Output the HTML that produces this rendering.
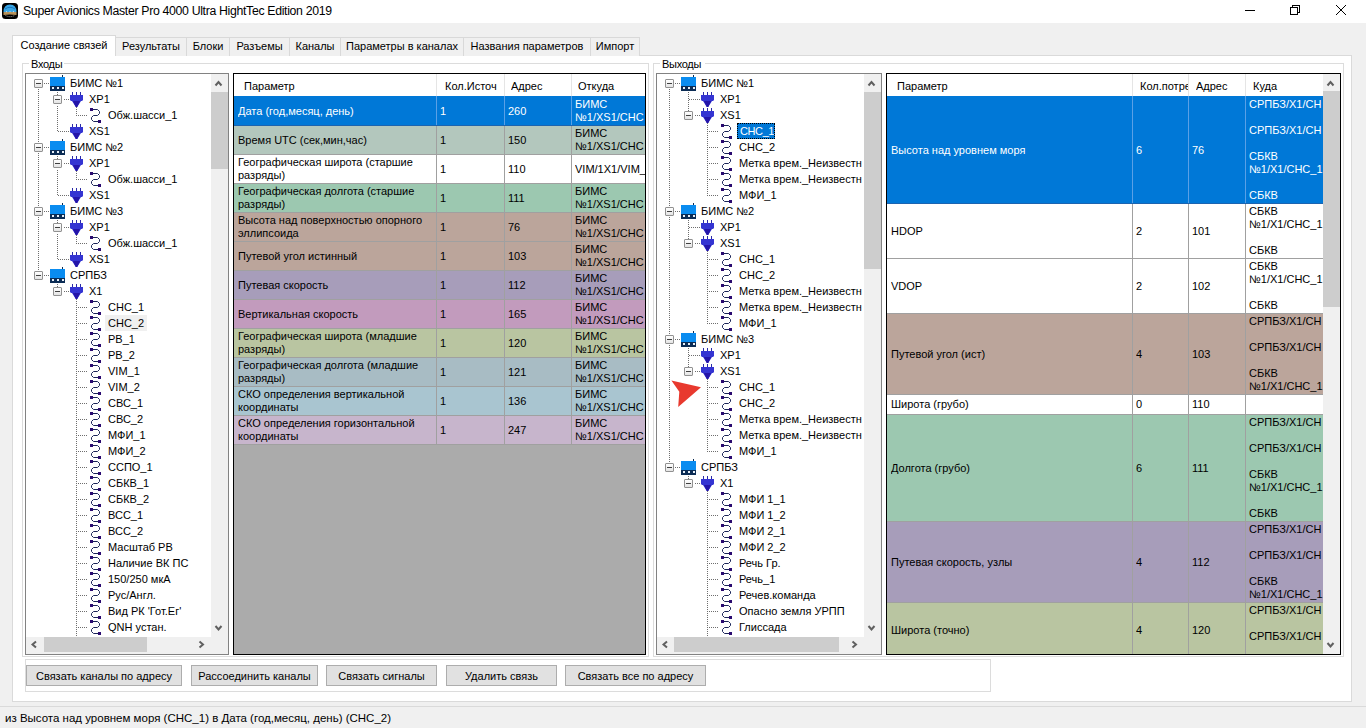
<!DOCTYPE html><html><head><meta charset="utf-8"><style>
html,body{margin:0;padding:0;}
body{width:1366px;height:728px;overflow:hidden;position:relative;background:#f0f0f0;font-family:"Liberation Sans", sans-serif;color:#000;}
div,span,svg{position:absolute;}
span{white-space:nowrap;}
.clip{overflow:hidden;}

</style></head><body>
<div style="left:0px;top:0px;width:1366px;height:23px;background:#fff"></div>
<svg style="left:2px;top:3px" width="16" height="16" viewBox="0 0 16 16">
<rect x="0" y="0" width="16" height="16" rx="3.5" fill="#000"/>
<path d="M1.5 9 Q1.5 1.5 8 1.5 Q14.5 1.5 14.5 9 Z" fill="#38a6e6"/>
<path d="M3 6 Q8 2.5 13 6" stroke="#1870b8" stroke-width="0.9" fill="none"/>
<path d="M1.5 9 H14.5 V12 Q8 11 1.5 12 Z" fill="#b8925a"/>
<path d="M4 8.7 H5 M7.5 8.7 H8.5 M11 8.7 H12" stroke="#f0f0f0" stroke-width="0.8"/>
<path d="M3.5 12.5 Q8 14.8 12.5 12.5" stroke="#c8c8c8" stroke-width="0.8" fill="none" stroke-dasharray="1 1"/>
</svg>
<span style="left:23px;top:4.24px;font-size:12.3px;line-height:15px;color:#000;letter-spacing:-0.33px">Super Avionics Master Pro 4000 Ultra HightTec Edition 2019</span>
<div style="left:1245px;top:10px;width:10px;height:1px;background:#000"></div>
<div style="left:1292px;top:5px;width:8px;height:8px;box-sizing:border-box;border:1px solid #000;background:#fff"></div>
<div style="left:1290px;top:7px;width:8px;height:8px;box-sizing:border-box;border:1px solid #000;background:#fff"></div>
<svg style="left:1335px;top:4px" width="12" height="12" viewBox="0 0 12 12">
<path d="M1 1 L11 11 M11 1 L1 11" stroke="#000" stroke-width="1"/></svg>
<div style="left:12px;top:55px;width:1340px;height:647px;box-sizing:border-box;border:1px solid #dadada;background:#fff"></div>
<div style="left:115px;top:37px;width:72px;height:19px;box-sizing:border-box;border:1px solid #d9d9d9;border-bottom:none;background:#f0f0f0"></div>
<span style="left:115px;width:72px;top:40px;font-size:11px;line-height:13px;text-align:center">Результаты</span>
<div style="left:186px;top:37px;width:44px;height:19px;box-sizing:border-box;border:1px solid #d9d9d9;border-bottom:none;background:#f0f0f0"></div>
<span style="left:186px;width:44px;top:40px;font-size:11px;line-height:13px;text-align:center">Блоки</span>
<div style="left:229px;top:37px;width:61px;height:19px;box-sizing:border-box;border:1px solid #d9d9d9;border-bottom:none;background:#f0f0f0"></div>
<span style="left:229px;width:61px;top:40px;font-size:11px;line-height:13px;text-align:center">Разъемы</span>
<div style="left:289px;top:37px;width:52px;height:19px;box-sizing:border-box;border:1px solid #d9d9d9;border-bottom:none;background:#f0f0f0"></div>
<span style="left:289px;width:52px;top:40px;font-size:11px;line-height:13px;text-align:center">Каналы</span>
<div style="left:340px;top:37px;width:124px;height:19px;box-sizing:border-box;border:1px solid #d9d9d9;border-bottom:none;background:#f0f0f0"></div>
<span style="left:340px;width:124px;top:40px;font-size:11px;line-height:13px;text-align:center">Параметры в каналах</span>
<div style="left:463px;top:37px;width:128px;height:19px;box-sizing:border-box;border:1px solid #d9d9d9;border-bottom:none;background:#f0f0f0"></div>
<span style="left:463px;width:128px;top:40px;font-size:11px;line-height:13px;text-align:center">Названия параметров</span>
<div style="left:590px;top:37px;width:50px;height:19px;box-sizing:border-box;border:1px solid #d9d9d9;border-bottom:none;background:#f0f0f0"></div>
<span style="left:590px;width:50px;top:40px;font-size:11px;line-height:13px;text-align:center">Импорт</span>
<div style="left:12px;top:35px;width:104px;height:21px;box-sizing:border-box;border:1px solid #d9d9d9;border-bottom:none;background:#fff"></div>
<div style="left:13px;top:55px;width:102px;height:1px;background:#fff"></div>
<span style="left:12px;width:104px;top:39px;font-size:11px;line-height:13px;text-align:center">Создание связей</span>
<div style="left:22px;top:63px;width:627px;height:594px;box-sizing:border-box;border:1px solid #dcdcdc"></div>
<div style="left:29px;top:58px;width:35px;height:12px;background:#fff"></div>
<span style="left:31px;top:57.69px;font-size:11px;line-height:13px;letter-spacing:-0.3px">Входы</span>
<div style="left:653px;top:63px;width:691px;height:594px;box-sizing:border-box;border:1px solid #dcdcdc"></div>
<div style="left:660px;top:58px;width:45px;height:12px;background:#fff"></div>
<span style="left:662px;top:57.69px;font-size:11px;line-height:13px;letter-spacing:-0.3px">Выходы</span>
<div style="left:25px;top:73px;width:204px;height:582px;box-sizing:border-box;border:1px solid #828282;background:#fff"></div>
<div class="clip" style="left:26px;top:74px;width:185px;height:562px">
<div style="left:18px;top:9px;width:6px;height:1px;background:repeating-linear-gradient(to right,#6e6e6e 0 1px,transparent 1px 2px)"></div>
<div style="left:12px;top:15px;width:1px;height:54px;background:repeating-linear-gradient(to bottom,#6e6e6e 0 1px,transparent 1px 2px)"></div>
<div style="left:8px;top:5px;width:9px;height:9px;box-sizing:border-box;border:1px solid #919191;border-radius:1px;background:linear-gradient(#fff,#e4e4e4)"></div>
<div style="left:10px;top:9px;width:5px;height:1px;background:#404040"></div>
<div style="left:38px;top:25px;width:5px;height:1px;background:repeating-linear-gradient(to right,#6e6e6e 0 1px,transparent 1px 2px)"></div>
<div style="left:31px;top:32px;width:1px;height:25px;background:repeating-linear-gradient(to bottom,#6e6e6e 0 1px,transparent 1px 2px)"></div>
<div style="left:27px;top:21px;width:9px;height:9px;box-sizing:border-box;border:1px solid #919191;border-radius:1px;background:linear-gradient(#fff,#e4e4e4)"></div>
<div style="left:29px;top:25px;width:5px;height:1px;background:#404040"></div>
<div style="left:50px;top:41px;width:12px;height:1px;background:repeating-linear-gradient(to right,#6e6e6e 0 1px,transparent 1px 2px)"></div>
<div style="left:32px;top:57px;width:11px;height:1px;background:repeating-linear-gradient(to right,#6e6e6e 0 1px,transparent 1px 2px)"></div>
<div style="left:18px;top:73px;width:6px;height:1px;background:repeating-linear-gradient(to right,#6e6e6e 0 1px,transparent 1px 2px)"></div>
<div style="left:12px;top:79px;width:1px;height:54px;background:repeating-linear-gradient(to bottom,#6e6e6e 0 1px,transparent 1px 2px)"></div>
<div style="left:8px;top:69px;width:9px;height:9px;box-sizing:border-box;border:1px solid #919191;border-radius:1px;background:linear-gradient(#fff,#e4e4e4)"></div>
<div style="left:10px;top:73px;width:5px;height:1px;background:#404040"></div>
<div style="left:38px;top:89px;width:5px;height:1px;background:repeating-linear-gradient(to right,#6e6e6e 0 1px,transparent 1px 2px)"></div>
<div style="left:31px;top:96px;width:1px;height:25px;background:repeating-linear-gradient(to bottom,#6e6e6e 0 1px,transparent 1px 2px)"></div>
<div style="left:27px;top:85px;width:9px;height:9px;box-sizing:border-box;border:1px solid #919191;border-radius:1px;background:linear-gradient(#fff,#e4e4e4)"></div>
<div style="left:29px;top:89px;width:5px;height:1px;background:#404040"></div>
<div style="left:50px;top:105px;width:12px;height:1px;background:repeating-linear-gradient(to right,#6e6e6e 0 1px,transparent 1px 2px)"></div>
<div style="left:32px;top:121px;width:11px;height:1px;background:repeating-linear-gradient(to right,#6e6e6e 0 1px,transparent 1px 2px)"></div>
<div style="left:18px;top:137px;width:6px;height:1px;background:repeating-linear-gradient(to right,#6e6e6e 0 1px,transparent 1px 2px)"></div>
<div style="left:12px;top:143px;width:1px;height:54px;background:repeating-linear-gradient(to bottom,#6e6e6e 0 1px,transparent 1px 2px)"></div>
<div style="left:8px;top:133px;width:9px;height:9px;box-sizing:border-box;border:1px solid #919191;border-radius:1px;background:linear-gradient(#fff,#e4e4e4)"></div>
<div style="left:10px;top:137px;width:5px;height:1px;background:#404040"></div>
<div style="left:38px;top:153px;width:5px;height:1px;background:repeating-linear-gradient(to right,#6e6e6e 0 1px,transparent 1px 2px)"></div>
<div style="left:31px;top:160px;width:1px;height:25px;background:repeating-linear-gradient(to bottom,#6e6e6e 0 1px,transparent 1px 2px)"></div>
<div style="left:27px;top:149px;width:9px;height:9px;box-sizing:border-box;border:1px solid #919191;border-radius:1px;background:linear-gradient(#fff,#e4e4e4)"></div>
<div style="left:29px;top:153px;width:5px;height:1px;background:#404040"></div>
<div style="left:50px;top:169px;width:12px;height:1px;background:repeating-linear-gradient(to right,#6e6e6e 0 1px,transparent 1px 2px)"></div>
<div style="left:32px;top:185px;width:11px;height:1px;background:repeating-linear-gradient(to right,#6e6e6e 0 1px,transparent 1px 2px)"></div>
<div style="left:18px;top:201px;width:6px;height:1px;background:repeating-linear-gradient(to right,#6e6e6e 0 1px,transparent 1px 2px)"></div>
<div style="left:8px;top:197px;width:9px;height:9px;box-sizing:border-box;border:1px solid #919191;border-radius:1px;background:linear-gradient(#fff,#e4e4e4)"></div>
<div style="left:10px;top:201px;width:5px;height:1px;background:#404040"></div>
<div style="left:38px;top:217px;width:5px;height:1px;background:repeating-linear-gradient(to right,#6e6e6e 0 1px,transparent 1px 2px)"></div>
<div style="left:27px;top:213px;width:9px;height:9px;box-sizing:border-box;border:1px solid #919191;border-radius:1px;background:linear-gradient(#fff,#e4e4e4)"></div>
<div style="left:29px;top:217px;width:5px;height:1px;background:#404040"></div>
<div style="left:50px;top:233px;width:12px;height:1px;background:repeating-linear-gradient(to right,#6e6e6e 0 1px,transparent 1px 2px)"></div>
<div style="left:50px;top:235px;width:1px;height:14px;background:repeating-linear-gradient(to bottom,#6e6e6e 0 1px,transparent 1px 2px)"></div>
<div style="left:50px;top:249px;width:12px;height:1px;background:repeating-linear-gradient(to right,#6e6e6e 0 1px,transparent 1px 2px)"></div>
<div style="left:50px;top:251px;width:1px;height:14px;background:repeating-linear-gradient(to bottom,#6e6e6e 0 1px,transparent 1px 2px)"></div>
<div style="left:50px;top:265px;width:12px;height:1px;background:repeating-linear-gradient(to right,#6e6e6e 0 1px,transparent 1px 2px)"></div>
<div style="left:50px;top:267px;width:1px;height:14px;background:repeating-linear-gradient(to bottom,#6e6e6e 0 1px,transparent 1px 2px)"></div>
<div style="left:50px;top:281px;width:12px;height:1px;background:repeating-linear-gradient(to right,#6e6e6e 0 1px,transparent 1px 2px)"></div>
<div style="left:50px;top:283px;width:1px;height:14px;background:repeating-linear-gradient(to bottom,#6e6e6e 0 1px,transparent 1px 2px)"></div>
<div style="left:50px;top:297px;width:12px;height:1px;background:repeating-linear-gradient(to right,#6e6e6e 0 1px,transparent 1px 2px)"></div>
<div style="left:50px;top:299px;width:1px;height:14px;background:repeating-linear-gradient(to bottom,#6e6e6e 0 1px,transparent 1px 2px)"></div>
<div style="left:50px;top:313px;width:12px;height:1px;background:repeating-linear-gradient(to right,#6e6e6e 0 1px,transparent 1px 2px)"></div>
<div style="left:50px;top:315px;width:1px;height:14px;background:repeating-linear-gradient(to bottom,#6e6e6e 0 1px,transparent 1px 2px)"></div>
<div style="left:50px;top:329px;width:12px;height:1px;background:repeating-linear-gradient(to right,#6e6e6e 0 1px,transparent 1px 2px)"></div>
<div style="left:50px;top:331px;width:1px;height:14px;background:repeating-linear-gradient(to bottom,#6e6e6e 0 1px,transparent 1px 2px)"></div>
<div style="left:50px;top:345px;width:12px;height:1px;background:repeating-linear-gradient(to right,#6e6e6e 0 1px,transparent 1px 2px)"></div>
<div style="left:50px;top:347px;width:1px;height:14px;background:repeating-linear-gradient(to bottom,#6e6e6e 0 1px,transparent 1px 2px)"></div>
<div style="left:50px;top:361px;width:12px;height:1px;background:repeating-linear-gradient(to right,#6e6e6e 0 1px,transparent 1px 2px)"></div>
<div style="left:50px;top:363px;width:1px;height:14px;background:repeating-linear-gradient(to bottom,#6e6e6e 0 1px,transparent 1px 2px)"></div>
<div style="left:50px;top:377px;width:12px;height:1px;background:repeating-linear-gradient(to right,#6e6e6e 0 1px,transparent 1px 2px)"></div>
<div style="left:50px;top:379px;width:1px;height:14px;background:repeating-linear-gradient(to bottom,#6e6e6e 0 1px,transparent 1px 2px)"></div>
<div style="left:50px;top:393px;width:12px;height:1px;background:repeating-linear-gradient(to right,#6e6e6e 0 1px,transparent 1px 2px)"></div>
<div style="left:50px;top:395px;width:1px;height:14px;background:repeating-linear-gradient(to bottom,#6e6e6e 0 1px,transparent 1px 2px)"></div>
<div style="left:50px;top:409px;width:12px;height:1px;background:repeating-linear-gradient(to right,#6e6e6e 0 1px,transparent 1px 2px)"></div>
<div style="left:50px;top:411px;width:1px;height:14px;background:repeating-linear-gradient(to bottom,#6e6e6e 0 1px,transparent 1px 2px)"></div>
<div style="left:50px;top:425px;width:12px;height:1px;background:repeating-linear-gradient(to right,#6e6e6e 0 1px,transparent 1px 2px)"></div>
<div style="left:50px;top:427px;width:1px;height:14px;background:repeating-linear-gradient(to bottom,#6e6e6e 0 1px,transparent 1px 2px)"></div>
<div style="left:50px;top:441px;width:12px;height:1px;background:repeating-linear-gradient(to right,#6e6e6e 0 1px,transparent 1px 2px)"></div>
<div style="left:50px;top:443px;width:1px;height:14px;background:repeating-linear-gradient(to bottom,#6e6e6e 0 1px,transparent 1px 2px)"></div>
<div style="left:50px;top:457px;width:12px;height:1px;background:repeating-linear-gradient(to right,#6e6e6e 0 1px,transparent 1px 2px)"></div>
<div style="left:50px;top:459px;width:1px;height:14px;background:repeating-linear-gradient(to bottom,#6e6e6e 0 1px,transparent 1px 2px)"></div>
<div style="left:50px;top:473px;width:12px;height:1px;background:repeating-linear-gradient(to right,#6e6e6e 0 1px,transparent 1px 2px)"></div>
<div style="left:50px;top:475px;width:1px;height:14px;background:repeating-linear-gradient(to bottom,#6e6e6e 0 1px,transparent 1px 2px)"></div>
<div style="left:50px;top:489px;width:12px;height:1px;background:repeating-linear-gradient(to right,#6e6e6e 0 1px,transparent 1px 2px)"></div>
<div style="left:50px;top:491px;width:1px;height:14px;background:repeating-linear-gradient(to bottom,#6e6e6e 0 1px,transparent 1px 2px)"></div>
<div style="left:50px;top:505px;width:12px;height:1px;background:repeating-linear-gradient(to right,#6e6e6e 0 1px,transparent 1px 2px)"></div>
<div style="left:50px;top:507px;width:1px;height:14px;background:repeating-linear-gradient(to bottom,#6e6e6e 0 1px,transparent 1px 2px)"></div>
<div style="left:50px;top:521px;width:12px;height:1px;background:repeating-linear-gradient(to right,#6e6e6e 0 1px,transparent 1px 2px)"></div>
<div style="left:50px;top:523px;width:1px;height:14px;background:repeating-linear-gradient(to bottom,#6e6e6e 0 1px,transparent 1px 2px)"></div>
<div style="left:50px;top:537px;width:12px;height:1px;background:repeating-linear-gradient(to right,#6e6e6e 0 1px,transparent 1px 2px)"></div>
<div style="left:50px;top:539px;width:1px;height:14px;background:repeating-linear-gradient(to bottom,#6e6e6e 0 1px,transparent 1px 2px)"></div>
<div style="left:50px;top:553px;width:12px;height:1px;background:repeating-linear-gradient(to right,#6e6e6e 0 1px,transparent 1px 2px)"></div>
<div style="left:50px;top:555px;width:1px;height:14px;background:repeating-linear-gradient(to bottom,#6e6e6e 0 1px,transparent 1px 2px)"></div>
<div style="left:50px;top:569px;width:12px;height:1px;background:repeating-linear-gradient(to right,#6e6e6e 0 1px,transparent 1px 2px)"></div>
<div style="left:31px;top:18px;width:1px;height:3px;background:repeating-linear-gradient(to bottom,#6e6e6e 0 1px,transparent 1px 2px)"></div>
<div style="left:50px;top:33px;width:1px;height:8px;background:repeating-linear-gradient(to bottom,#6e6e6e 0 1px,transparent 1px 2px)"></div>
<div style="left:31px;top:82px;width:1px;height:3px;background:repeating-linear-gradient(to bottom,#6e6e6e 0 1px,transparent 1px 2px)"></div>
<div style="left:50px;top:97px;width:1px;height:8px;background:repeating-linear-gradient(to bottom,#6e6e6e 0 1px,transparent 1px 2px)"></div>
<div style="left:31px;top:146px;width:1px;height:3px;background:repeating-linear-gradient(to bottom,#6e6e6e 0 1px,transparent 1px 2px)"></div>
<div style="left:50px;top:161px;width:1px;height:8px;background:repeating-linear-gradient(to bottom,#6e6e6e 0 1px,transparent 1px 2px)"></div>
<div style="left:31px;top:210px;width:1px;height:3px;background:repeating-linear-gradient(to bottom,#6e6e6e 0 1px,transparent 1px 2px)"></div>
<div style="left:50px;top:225px;width:1px;height:8px;background:repeating-linear-gradient(to bottom,#6e6e6e 0 1px,transparent 1px 2px)"></div>
<svg style="left:24px;top:1px" width="16" height="16" viewBox="0 0 16 16" shape-rendering="crispEdges">
<rect x="12" y="0" width="1" height="2" fill="#0a2a50"/>
<rect x="0" y="2" width="15" height="9" fill="#0a8cf0"/>
<rect x="0" y="11" width="15" height="5" fill="#0b2c55"/>
<rect x="1.5" y="12" width="2" height="1.5" fill="#e8f0f8"/><rect x="6.5" y="12" width="2" height="1.5" fill="#e8f0f8"/><rect x="11.5" y="12" width="2" height="1.5" fill="#e8f0f8"/>
</svg>
<span style="left:44px;top:1px;font-size:11px;line-height:16px">БИМС №1</span>
<svg style="left:43px;top:17px" width="16" height="16" viewBox="0 0 16 16">
<rect x="3" y="1" width="1" height="3" fill="#2a2aa8" shape-rendering="crispEdges"/><rect x="7" y="1" width="1" height="3" fill="#2a2aa8" shape-rendering="crispEdges"/><rect x="11" y="1" width="1" height="3" fill="#2a2aa8" shape-rendering="crispEdges"/>
<path d="M1 4 H14 V9 L13 10 H12 L8.2 16 H6.8 L3 10 H2 L1 9 Z" fill="#3434d2"/>
<path d="M4 10 H11 L8.2 16 H6.8 Z" fill="#2414a8"/>
</svg>
<span style="left:63px;top:17px;font-size:11px;line-height:16px">XP1</span>
<svg style="left:62px;top:33px" width="16" height="16" viewBox="0 0 16 16">
<path d="M5 2.5 H9.5 L11.5 4.5 V6.5 L9.5 8.5 H5.5 L3.5 10.5 V12.5 L5.5 14.5 H10" stroke="#1a2458" stroke-width="1" fill="none"/>
<rect x="2" y="1" width="3" height="3" fill="#2a0a70"/>
<rect x="10" y="13" width="3" height="3" fill="#2a0a70"/>
</svg>
<span style="left:82px;top:33px;font-size:11px;line-height:16px">Обж.шасси_1</span>
<svg style="left:43px;top:49px" width="16" height="16" viewBox="0 0 16 16">
<rect x="3" y="1" width="1" height="3" fill="#2a2aa8" shape-rendering="crispEdges"/><rect x="7" y="1" width="1" height="3" fill="#2a2aa8" shape-rendering="crispEdges"/><rect x="11" y="1" width="1" height="3" fill="#2a2aa8" shape-rendering="crispEdges"/>
<path d="M1 4 H14 V9 L13 10 H12 L8.2 16 H6.8 L3 10 H2 L1 9 Z" fill="#3434d2"/>
<path d="M4 10 H11 L8.2 16 H6.8 Z" fill="#2414a8"/>
</svg>
<span style="left:63px;top:49px;font-size:11px;line-height:16px">XS1</span>
<svg style="left:24px;top:65px" width="16" height="16" viewBox="0 0 16 16" shape-rendering="crispEdges">
<rect x="12" y="0" width="1" height="2" fill="#0a2a50"/>
<rect x="0" y="2" width="15" height="9" fill="#0a8cf0"/>
<rect x="0" y="11" width="15" height="5" fill="#0b2c55"/>
<rect x="1.5" y="12" width="2" height="1.5" fill="#e8f0f8"/><rect x="6.5" y="12" width="2" height="1.5" fill="#e8f0f8"/><rect x="11.5" y="12" width="2" height="1.5" fill="#e8f0f8"/>
</svg>
<span style="left:44px;top:65px;font-size:11px;line-height:16px">БИМС №2</span>
<svg style="left:43px;top:81px" width="16" height="16" viewBox="0 0 16 16">
<rect x="3" y="1" width="1" height="3" fill="#2a2aa8" shape-rendering="crispEdges"/><rect x="7" y="1" width="1" height="3" fill="#2a2aa8" shape-rendering="crispEdges"/><rect x="11" y="1" width="1" height="3" fill="#2a2aa8" shape-rendering="crispEdges"/>
<path d="M1 4 H14 V9 L13 10 H12 L8.2 16 H6.8 L3 10 H2 L1 9 Z" fill="#3434d2"/>
<path d="M4 10 H11 L8.2 16 H6.8 Z" fill="#2414a8"/>
</svg>
<span style="left:63px;top:81px;font-size:11px;line-height:16px">XP1</span>
<svg style="left:62px;top:97px" width="16" height="16" viewBox="0 0 16 16">
<path d="M5 2.5 H9.5 L11.5 4.5 V6.5 L9.5 8.5 H5.5 L3.5 10.5 V12.5 L5.5 14.5 H10" stroke="#1a2458" stroke-width="1" fill="none"/>
<rect x="2" y="1" width="3" height="3" fill="#2a0a70"/>
<rect x="10" y="13" width="3" height="3" fill="#2a0a70"/>
</svg>
<span style="left:82px;top:97px;font-size:11px;line-height:16px">Обж.шасси_1</span>
<svg style="left:43px;top:113px" width="16" height="16" viewBox="0 0 16 16">
<rect x="3" y="1" width="1" height="3" fill="#2a2aa8" shape-rendering="crispEdges"/><rect x="7" y="1" width="1" height="3" fill="#2a2aa8" shape-rendering="crispEdges"/><rect x="11" y="1" width="1" height="3" fill="#2a2aa8" shape-rendering="crispEdges"/>
<path d="M1 4 H14 V9 L13 10 H12 L8.2 16 H6.8 L3 10 H2 L1 9 Z" fill="#3434d2"/>
<path d="M4 10 H11 L8.2 16 H6.8 Z" fill="#2414a8"/>
</svg>
<span style="left:63px;top:113px;font-size:11px;line-height:16px">XS1</span>
<svg style="left:24px;top:129px" width="16" height="16" viewBox="0 0 16 16" shape-rendering="crispEdges">
<rect x="12" y="0" width="1" height="2" fill="#0a2a50"/>
<rect x="0" y="2" width="15" height="9" fill="#0a8cf0"/>
<rect x="0" y="11" width="15" height="5" fill="#0b2c55"/>
<rect x="1.5" y="12" width="2" height="1.5" fill="#e8f0f8"/><rect x="6.5" y="12" width="2" height="1.5" fill="#e8f0f8"/><rect x="11.5" y="12" width="2" height="1.5" fill="#e8f0f8"/>
</svg>
<span style="left:44px;top:129px;font-size:11px;line-height:16px">БИМС №3</span>
<svg style="left:43px;top:145px" width="16" height="16" viewBox="0 0 16 16">
<rect x="3" y="1" width="1" height="3" fill="#2a2aa8" shape-rendering="crispEdges"/><rect x="7" y="1" width="1" height="3" fill="#2a2aa8" shape-rendering="crispEdges"/><rect x="11" y="1" width="1" height="3" fill="#2a2aa8" shape-rendering="crispEdges"/>
<path d="M1 4 H14 V9 L13 10 H12 L8.2 16 H6.8 L3 10 H2 L1 9 Z" fill="#3434d2"/>
<path d="M4 10 H11 L8.2 16 H6.8 Z" fill="#2414a8"/>
</svg>
<span style="left:63px;top:145px;font-size:11px;line-height:16px">XP1</span>
<svg style="left:62px;top:161px" width="16" height="16" viewBox="0 0 16 16">
<path d="M5 2.5 H9.5 L11.5 4.5 V6.5 L9.5 8.5 H5.5 L3.5 10.5 V12.5 L5.5 14.5 H10" stroke="#1a2458" stroke-width="1" fill="none"/>
<rect x="2" y="1" width="3" height="3" fill="#2a0a70"/>
<rect x="10" y="13" width="3" height="3" fill="#2a0a70"/>
</svg>
<span style="left:82px;top:161px;font-size:11px;line-height:16px">Обж.шасси_1</span>
<svg style="left:43px;top:177px" width="16" height="16" viewBox="0 0 16 16">
<rect x="3" y="1" width="1" height="3" fill="#2a2aa8" shape-rendering="crispEdges"/><rect x="7" y="1" width="1" height="3" fill="#2a2aa8" shape-rendering="crispEdges"/><rect x="11" y="1" width="1" height="3" fill="#2a2aa8" shape-rendering="crispEdges"/>
<path d="M1 4 H14 V9 L13 10 H12 L8.2 16 H6.8 L3 10 H2 L1 9 Z" fill="#3434d2"/>
<path d="M4 10 H11 L8.2 16 H6.8 Z" fill="#2414a8"/>
</svg>
<span style="left:63px;top:177px;font-size:11px;line-height:16px">XS1</span>
<svg style="left:24px;top:193px" width="16" height="16" viewBox="0 0 16 16" shape-rendering="crispEdges">
<rect x="12" y="0" width="1" height="2" fill="#0a2a50"/>
<rect x="0" y="2" width="15" height="9" fill="#0a8cf0"/>
<rect x="0" y="11" width="15" height="5" fill="#0b2c55"/>
<rect x="1.5" y="12" width="2" height="1.5" fill="#e8f0f8"/><rect x="6.5" y="12" width="2" height="1.5" fill="#e8f0f8"/><rect x="11.5" y="12" width="2" height="1.5" fill="#e8f0f8"/>
</svg>
<span style="left:44px;top:193px;font-size:11px;line-height:16px">СРПБЗ</span>
<svg style="left:43px;top:209px" width="16" height="16" viewBox="0 0 16 16">
<rect x="3" y="1" width="1" height="3" fill="#2a2aa8" shape-rendering="crispEdges"/><rect x="7" y="1" width="1" height="3" fill="#2a2aa8" shape-rendering="crispEdges"/><rect x="11" y="1" width="1" height="3" fill="#2a2aa8" shape-rendering="crispEdges"/>
<path d="M1 4 H14 V9 L13 10 H12 L8.2 16 H6.8 L3 10 H2 L1 9 Z" fill="#3434d2"/>
<path d="M4 10 H11 L8.2 16 H6.8 Z" fill="#2414a8"/>
</svg>
<span style="left:63px;top:209px;font-size:11px;line-height:16px">X1</span>
<svg style="left:62px;top:225px" width="16" height="16" viewBox="0 0 16 16">
<path d="M5 2.5 H9.5 L11.5 4.5 V6.5 L9.5 8.5 H5.5 L3.5 10.5 V12.5 L5.5 14.5 H10" stroke="#1a2458" stroke-width="1" fill="none"/>
<rect x="2" y="1" width="3" height="3" fill="#2a0a70"/>
<rect x="10" y="13" width="3" height="3" fill="#2a0a70"/>
</svg>
<span style="left:82px;top:225px;font-size:11px;line-height:16px">СНС_1</span>
<svg style="left:62px;top:241px" width="16" height="16" viewBox="0 0 16 16">
<path d="M5 2.5 H9.5 L11.5 4.5 V6.5 L9.5 8.5 H5.5 L3.5 10.5 V12.5 L5.5 14.5 H10" stroke="#1a2458" stroke-width="1" fill="none"/>
<rect x="2" y="1" width="3" height="3" fill="#2a0a70"/>
<rect x="10" y="13" width="3" height="3" fill="#2a0a70"/>
</svg>
<div style="left:79px;top:241px;height:16px;padding:0 2px;box-sizing:border-box;background:#f0f0f0"><span style="position:static;display:block;font-size:11px;line-height:16px;padding:0 1px">СНС_2</span></div>
<svg style="left:62px;top:257px" width="16" height="16" viewBox="0 0 16 16">
<path d="M5 2.5 H9.5 L11.5 4.5 V6.5 L9.5 8.5 H5.5 L3.5 10.5 V12.5 L5.5 14.5 H10" stroke="#1a2458" stroke-width="1" fill="none"/>
<rect x="2" y="1" width="3" height="3" fill="#2a0a70"/>
<rect x="10" y="13" width="3" height="3" fill="#2a0a70"/>
</svg>
<span style="left:82px;top:257px;font-size:11px;line-height:16px">РВ_1</span>
<svg style="left:62px;top:273px" width="16" height="16" viewBox="0 0 16 16">
<path d="M5 2.5 H9.5 L11.5 4.5 V6.5 L9.5 8.5 H5.5 L3.5 10.5 V12.5 L5.5 14.5 H10" stroke="#1a2458" stroke-width="1" fill="none"/>
<rect x="2" y="1" width="3" height="3" fill="#2a0a70"/>
<rect x="10" y="13" width="3" height="3" fill="#2a0a70"/>
</svg>
<span style="left:82px;top:273px;font-size:11px;line-height:16px">РВ_2</span>
<svg style="left:62px;top:289px" width="16" height="16" viewBox="0 0 16 16">
<path d="M5 2.5 H9.5 L11.5 4.5 V6.5 L9.5 8.5 H5.5 L3.5 10.5 V12.5 L5.5 14.5 H10" stroke="#1a2458" stroke-width="1" fill="none"/>
<rect x="2" y="1" width="3" height="3" fill="#2a0a70"/>
<rect x="10" y="13" width="3" height="3" fill="#2a0a70"/>
</svg>
<span style="left:82px;top:289px;font-size:11px;line-height:16px">VIM_1</span>
<svg style="left:62px;top:305px" width="16" height="16" viewBox="0 0 16 16">
<path d="M5 2.5 H9.5 L11.5 4.5 V6.5 L9.5 8.5 H5.5 L3.5 10.5 V12.5 L5.5 14.5 H10" stroke="#1a2458" stroke-width="1" fill="none"/>
<rect x="2" y="1" width="3" height="3" fill="#2a0a70"/>
<rect x="10" y="13" width="3" height="3" fill="#2a0a70"/>
</svg>
<span style="left:82px;top:305px;font-size:11px;line-height:16px">VIM_2</span>
<svg style="left:62px;top:321px" width="16" height="16" viewBox="0 0 16 16">
<path d="M5 2.5 H9.5 L11.5 4.5 V6.5 L9.5 8.5 H5.5 L3.5 10.5 V12.5 L5.5 14.5 H10" stroke="#1a2458" stroke-width="1" fill="none"/>
<rect x="2" y="1" width="3" height="3" fill="#2a0a70"/>
<rect x="10" y="13" width="3" height="3" fill="#2a0a70"/>
</svg>
<span style="left:82px;top:321px;font-size:11px;line-height:16px">СВС_1</span>
<svg style="left:62px;top:337px" width="16" height="16" viewBox="0 0 16 16">
<path d="M5 2.5 H9.5 L11.5 4.5 V6.5 L9.5 8.5 H5.5 L3.5 10.5 V12.5 L5.5 14.5 H10" stroke="#1a2458" stroke-width="1" fill="none"/>
<rect x="2" y="1" width="3" height="3" fill="#2a0a70"/>
<rect x="10" y="13" width="3" height="3" fill="#2a0a70"/>
</svg>
<span style="left:82px;top:337px;font-size:11px;line-height:16px">СВС_2</span>
<svg style="left:62px;top:353px" width="16" height="16" viewBox="0 0 16 16">
<path d="M5 2.5 H9.5 L11.5 4.5 V6.5 L9.5 8.5 H5.5 L3.5 10.5 V12.5 L5.5 14.5 H10" stroke="#1a2458" stroke-width="1" fill="none"/>
<rect x="2" y="1" width="3" height="3" fill="#2a0a70"/>
<rect x="10" y="13" width="3" height="3" fill="#2a0a70"/>
</svg>
<span style="left:82px;top:353px;font-size:11px;line-height:16px">МФИ_1</span>
<svg style="left:62px;top:369px" width="16" height="16" viewBox="0 0 16 16">
<path d="M5 2.5 H9.5 L11.5 4.5 V6.5 L9.5 8.5 H5.5 L3.5 10.5 V12.5 L5.5 14.5 H10" stroke="#1a2458" stroke-width="1" fill="none"/>
<rect x="2" y="1" width="3" height="3" fill="#2a0a70"/>
<rect x="10" y="13" width="3" height="3" fill="#2a0a70"/>
</svg>
<span style="left:82px;top:369px;font-size:11px;line-height:16px">МФИ_2</span>
<svg style="left:62px;top:385px" width="16" height="16" viewBox="0 0 16 16">
<path d="M5 2.5 H9.5 L11.5 4.5 V6.5 L9.5 8.5 H5.5 L3.5 10.5 V12.5 L5.5 14.5 H10" stroke="#1a2458" stroke-width="1" fill="none"/>
<rect x="2" y="1" width="3" height="3" fill="#2a0a70"/>
<rect x="10" y="13" width="3" height="3" fill="#2a0a70"/>
</svg>
<span style="left:82px;top:385px;font-size:11px;line-height:16px">ССПО_1</span>
<svg style="left:62px;top:401px" width="16" height="16" viewBox="0 0 16 16">
<path d="M5 2.5 H9.5 L11.5 4.5 V6.5 L9.5 8.5 H5.5 L3.5 10.5 V12.5 L5.5 14.5 H10" stroke="#1a2458" stroke-width="1" fill="none"/>
<rect x="2" y="1" width="3" height="3" fill="#2a0a70"/>
<rect x="10" y="13" width="3" height="3" fill="#2a0a70"/>
</svg>
<span style="left:82px;top:401px;font-size:11px;line-height:16px">СБКВ_1</span>
<svg style="left:62px;top:417px" width="16" height="16" viewBox="0 0 16 16">
<path d="M5 2.5 H9.5 L11.5 4.5 V6.5 L9.5 8.5 H5.5 L3.5 10.5 V12.5 L5.5 14.5 H10" stroke="#1a2458" stroke-width="1" fill="none"/>
<rect x="2" y="1" width="3" height="3" fill="#2a0a70"/>
<rect x="10" y="13" width="3" height="3" fill="#2a0a70"/>
</svg>
<span style="left:82px;top:417px;font-size:11px;line-height:16px">СБКВ_2</span>
<svg style="left:62px;top:433px" width="16" height="16" viewBox="0 0 16 16">
<path d="M5 2.5 H9.5 L11.5 4.5 V6.5 L9.5 8.5 H5.5 L3.5 10.5 V12.5 L5.5 14.5 H10" stroke="#1a2458" stroke-width="1" fill="none"/>
<rect x="2" y="1" width="3" height="3" fill="#2a0a70"/>
<rect x="10" y="13" width="3" height="3" fill="#2a0a70"/>
</svg>
<span style="left:82px;top:433px;font-size:11px;line-height:16px">ВСС_1</span>
<svg style="left:62px;top:449px" width="16" height="16" viewBox="0 0 16 16">
<path d="M5 2.5 H9.5 L11.5 4.5 V6.5 L9.5 8.5 H5.5 L3.5 10.5 V12.5 L5.5 14.5 H10" stroke="#1a2458" stroke-width="1" fill="none"/>
<rect x="2" y="1" width="3" height="3" fill="#2a0a70"/>
<rect x="10" y="13" width="3" height="3" fill="#2a0a70"/>
</svg>
<span style="left:82px;top:449px;font-size:11px;line-height:16px">ВСС_2</span>
<svg style="left:62px;top:465px" width="16" height="16" viewBox="0 0 16 16">
<path d="M5 2.5 H9.5 L11.5 4.5 V6.5 L9.5 8.5 H5.5 L3.5 10.5 V12.5 L5.5 14.5 H10" stroke="#1a2458" stroke-width="1" fill="none"/>
<rect x="2" y="1" width="3" height="3" fill="#2a0a70"/>
<rect x="10" y="13" width="3" height="3" fill="#2a0a70"/>
</svg>
<span style="left:82px;top:465px;font-size:11px;line-height:16px">Масштаб РВ</span>
<svg style="left:62px;top:481px" width="16" height="16" viewBox="0 0 16 16">
<path d="M5 2.5 H9.5 L11.5 4.5 V6.5 L9.5 8.5 H5.5 L3.5 10.5 V12.5 L5.5 14.5 H10" stroke="#1a2458" stroke-width="1" fill="none"/>
<rect x="2" y="1" width="3" height="3" fill="#2a0a70"/>
<rect x="10" y="13" width="3" height="3" fill="#2a0a70"/>
</svg>
<span style="left:82px;top:481px;font-size:11px;line-height:16px">Наличие ВК ПС</span>
<svg style="left:62px;top:497px" width="16" height="16" viewBox="0 0 16 16">
<path d="M5 2.5 H9.5 L11.5 4.5 V6.5 L9.5 8.5 H5.5 L3.5 10.5 V12.5 L5.5 14.5 H10" stroke="#1a2458" stroke-width="1" fill="none"/>
<rect x="2" y="1" width="3" height="3" fill="#2a0a70"/>
<rect x="10" y="13" width="3" height="3" fill="#2a0a70"/>
</svg>
<span style="left:82px;top:497px;font-size:11px;line-height:16px">150/250 мкА</span>
<svg style="left:62px;top:513px" width="16" height="16" viewBox="0 0 16 16">
<path d="M5 2.5 H9.5 L11.5 4.5 V6.5 L9.5 8.5 H5.5 L3.5 10.5 V12.5 L5.5 14.5 H10" stroke="#1a2458" stroke-width="1" fill="none"/>
<rect x="2" y="1" width="3" height="3" fill="#2a0a70"/>
<rect x="10" y="13" width="3" height="3" fill="#2a0a70"/>
</svg>
<span style="left:82px;top:513px;font-size:11px;line-height:16px">Рус/Англ.</span>
<svg style="left:62px;top:529px" width="16" height="16" viewBox="0 0 16 16">
<path d="M5 2.5 H9.5 L11.5 4.5 V6.5 L9.5 8.5 H5.5 L3.5 10.5 V12.5 L5.5 14.5 H10" stroke="#1a2458" stroke-width="1" fill="none"/>
<rect x="2" y="1" width="3" height="3" fill="#2a0a70"/>
<rect x="10" y="13" width="3" height="3" fill="#2a0a70"/>
</svg>
<span style="left:82px;top:529px;font-size:11px;line-height:16px">Вид РК 'Гот.Ег'</span>
<svg style="left:62px;top:545px" width="16" height="16" viewBox="0 0 16 16">
<path d="M5 2.5 H9.5 L11.5 4.5 V6.5 L9.5 8.5 H5.5 L3.5 10.5 V12.5 L5.5 14.5 H10" stroke="#1a2458" stroke-width="1" fill="none"/>
<rect x="2" y="1" width="3" height="3" fill="#2a0a70"/>
<rect x="10" y="13" width="3" height="3" fill="#2a0a70"/>
</svg>
<span style="left:82px;top:545px;font-size:11px;line-height:16px">QNH устан.</span>
<svg style="left:62px;top:561px" width="16" height="16" viewBox="0 0 16 16">
<path d="M5 2.5 H9.5 L11.5 4.5 V6.5 L9.5 8.5 H5.5 L3.5 10.5 V12.5 L5.5 14.5 H10" stroke="#1a2458" stroke-width="1" fill="none"/>
<rect x="2" y="1" width="3" height="3" fill="#2a0a70"/>
<rect x="10" y="13" width="3" height="3" fill="#2a0a70"/>
</svg>
<span style="left:82px;top:561px;font-size:11px;line-height:16px">Сброс</span>
</div>
<div style="left:211px;top:74px;width:17px;height:563px;background:#f0f0f0"></div>
<div style="left:211px;top:92px;width:17px;height:77px;background:#cdcdcd"></div>
<svg style="left:211px;top:74px" width="17" height="17"><path d="M4.5 11.5 L7.5 8 L10.5 11.5" stroke="#606060" stroke-width="2" fill="none"/></svg>
<svg style="left:211px;top:620px" width="17" height="17"><path d="M4.5 6 L7.5 9.5 L10.5 6" stroke="#606060" stroke-width="2" fill="none"/></svg>
<div style="left:26px;top:637px;width:202px;height:17px;background:#f0f0f0"></div>
<div style="left:44px;top:637px;width:103px;height:15px;background:#cdcdcd"></div>
<svg style="left:26px;top:637px" width="17" height="17"><path d="M10 4.5 L6.5 7.5 L10 10.5" stroke="#606060" stroke-width="2" fill="none"/></svg>
<svg style="left:193px;top:637px" width="17" height="17"><path d="M6.5 4.5 L10 7.5 L6.5 10.5" stroke="#606060" stroke-width="2" fill="none"/></svg>
<div style="left:656px;top:73px;width:226px;height:582px;box-sizing:border-box;border:1px solid #828282;background:#fff"></div>
<div class="clip" style="left:657px;top:74px;width:207px;height:562px">
<div style="left:18px;top:9px;width:6px;height:1px;background:repeating-linear-gradient(to right,#6e6e6e 0 1px,transparent 1px 2px)"></div>
<div style="left:12px;top:15px;width:1px;height:118px;background:repeating-linear-gradient(to bottom,#6e6e6e 0 1px,transparent 1px 2px)"></div>
<div style="left:8px;top:5px;width:9px;height:9px;box-sizing:border-box;border:1px solid #919191;border-radius:1px;background:linear-gradient(#fff,#e4e4e4)"></div>
<div style="left:10px;top:9px;width:5px;height:1px;background:#404040"></div>
<div style="left:32px;top:25px;width:11px;height:1px;background:repeating-linear-gradient(to right,#6e6e6e 0 1px,transparent 1px 2px)"></div>
<div style="left:31px;top:26px;width:1px;height:11px;background:repeating-linear-gradient(to bottom,#6e6e6e 0 1px,transparent 1px 2px)"></div>
<div style="left:38px;top:41px;width:5px;height:1px;background:repeating-linear-gradient(to right,#6e6e6e 0 1px,transparent 1px 2px)"></div>
<div style="left:27px;top:37px;width:9px;height:9px;box-sizing:border-box;border:1px solid #919191;border-radius:1px;background:linear-gradient(#fff,#e4e4e4)"></div>
<div style="left:29px;top:41px;width:5px;height:1px;background:#404040"></div>
<div style="left:50px;top:57px;width:12px;height:1px;background:repeating-linear-gradient(to right,#6e6e6e 0 1px,transparent 1px 2px)"></div>
<div style="left:50px;top:59px;width:1px;height:14px;background:repeating-linear-gradient(to bottom,#6e6e6e 0 1px,transparent 1px 2px)"></div>
<div style="left:50px;top:73px;width:12px;height:1px;background:repeating-linear-gradient(to right,#6e6e6e 0 1px,transparent 1px 2px)"></div>
<div style="left:50px;top:75px;width:1px;height:14px;background:repeating-linear-gradient(to bottom,#6e6e6e 0 1px,transparent 1px 2px)"></div>
<div style="left:50px;top:89px;width:12px;height:1px;background:repeating-linear-gradient(to right,#6e6e6e 0 1px,transparent 1px 2px)"></div>
<div style="left:50px;top:91px;width:1px;height:14px;background:repeating-linear-gradient(to bottom,#6e6e6e 0 1px,transparent 1px 2px)"></div>
<div style="left:50px;top:105px;width:12px;height:1px;background:repeating-linear-gradient(to right,#6e6e6e 0 1px,transparent 1px 2px)"></div>
<div style="left:50px;top:107px;width:1px;height:14px;background:repeating-linear-gradient(to bottom,#6e6e6e 0 1px,transparent 1px 2px)"></div>
<div style="left:50px;top:121px;width:12px;height:1px;background:repeating-linear-gradient(to right,#6e6e6e 0 1px,transparent 1px 2px)"></div>
<div style="left:18px;top:137px;width:6px;height:1px;background:repeating-linear-gradient(to right,#6e6e6e 0 1px,transparent 1px 2px)"></div>
<div style="left:12px;top:143px;width:1px;height:118px;background:repeating-linear-gradient(to bottom,#6e6e6e 0 1px,transparent 1px 2px)"></div>
<div style="left:8px;top:133px;width:9px;height:9px;box-sizing:border-box;border:1px solid #919191;border-radius:1px;background:linear-gradient(#fff,#e4e4e4)"></div>
<div style="left:10px;top:137px;width:5px;height:1px;background:#404040"></div>
<div style="left:32px;top:153px;width:11px;height:1px;background:repeating-linear-gradient(to right,#6e6e6e 0 1px,transparent 1px 2px)"></div>
<div style="left:31px;top:154px;width:1px;height:11px;background:repeating-linear-gradient(to bottom,#6e6e6e 0 1px,transparent 1px 2px)"></div>
<div style="left:38px;top:169px;width:5px;height:1px;background:repeating-linear-gradient(to right,#6e6e6e 0 1px,transparent 1px 2px)"></div>
<div style="left:27px;top:165px;width:9px;height:9px;box-sizing:border-box;border:1px solid #919191;border-radius:1px;background:linear-gradient(#fff,#e4e4e4)"></div>
<div style="left:29px;top:169px;width:5px;height:1px;background:#404040"></div>
<div style="left:50px;top:185px;width:12px;height:1px;background:repeating-linear-gradient(to right,#6e6e6e 0 1px,transparent 1px 2px)"></div>
<div style="left:50px;top:187px;width:1px;height:14px;background:repeating-linear-gradient(to bottom,#6e6e6e 0 1px,transparent 1px 2px)"></div>
<div style="left:50px;top:201px;width:12px;height:1px;background:repeating-linear-gradient(to right,#6e6e6e 0 1px,transparent 1px 2px)"></div>
<div style="left:50px;top:203px;width:1px;height:14px;background:repeating-linear-gradient(to bottom,#6e6e6e 0 1px,transparent 1px 2px)"></div>
<div style="left:50px;top:217px;width:12px;height:1px;background:repeating-linear-gradient(to right,#6e6e6e 0 1px,transparent 1px 2px)"></div>
<div style="left:50px;top:219px;width:1px;height:14px;background:repeating-linear-gradient(to bottom,#6e6e6e 0 1px,transparent 1px 2px)"></div>
<div style="left:50px;top:233px;width:12px;height:1px;background:repeating-linear-gradient(to right,#6e6e6e 0 1px,transparent 1px 2px)"></div>
<div style="left:50px;top:235px;width:1px;height:14px;background:repeating-linear-gradient(to bottom,#6e6e6e 0 1px,transparent 1px 2px)"></div>
<div style="left:50px;top:249px;width:12px;height:1px;background:repeating-linear-gradient(to right,#6e6e6e 0 1px,transparent 1px 2px)"></div>
<div style="left:18px;top:265px;width:6px;height:1px;background:repeating-linear-gradient(to right,#6e6e6e 0 1px,transparent 1px 2px)"></div>
<div style="left:12px;top:271px;width:1px;height:118px;background:repeating-linear-gradient(to bottom,#6e6e6e 0 1px,transparent 1px 2px)"></div>
<div style="left:8px;top:261px;width:9px;height:9px;box-sizing:border-box;border:1px solid #919191;border-radius:1px;background:linear-gradient(#fff,#e4e4e4)"></div>
<div style="left:10px;top:265px;width:5px;height:1px;background:#404040"></div>
<div style="left:32px;top:281px;width:11px;height:1px;background:repeating-linear-gradient(to right,#6e6e6e 0 1px,transparent 1px 2px)"></div>
<div style="left:31px;top:282px;width:1px;height:11px;background:repeating-linear-gradient(to bottom,#6e6e6e 0 1px,transparent 1px 2px)"></div>
<div style="left:38px;top:297px;width:5px;height:1px;background:repeating-linear-gradient(to right,#6e6e6e 0 1px,transparent 1px 2px)"></div>
<div style="left:27px;top:293px;width:9px;height:9px;box-sizing:border-box;border:1px solid #919191;border-radius:1px;background:linear-gradient(#fff,#e4e4e4)"></div>
<div style="left:29px;top:297px;width:5px;height:1px;background:#404040"></div>
<div style="left:50px;top:313px;width:12px;height:1px;background:repeating-linear-gradient(to right,#6e6e6e 0 1px,transparent 1px 2px)"></div>
<div style="left:50px;top:315px;width:1px;height:14px;background:repeating-linear-gradient(to bottom,#6e6e6e 0 1px,transparent 1px 2px)"></div>
<div style="left:50px;top:329px;width:12px;height:1px;background:repeating-linear-gradient(to right,#6e6e6e 0 1px,transparent 1px 2px)"></div>
<div style="left:50px;top:331px;width:1px;height:14px;background:repeating-linear-gradient(to bottom,#6e6e6e 0 1px,transparent 1px 2px)"></div>
<div style="left:50px;top:345px;width:12px;height:1px;background:repeating-linear-gradient(to right,#6e6e6e 0 1px,transparent 1px 2px)"></div>
<div style="left:50px;top:347px;width:1px;height:14px;background:repeating-linear-gradient(to bottom,#6e6e6e 0 1px,transparent 1px 2px)"></div>
<div style="left:50px;top:361px;width:12px;height:1px;background:repeating-linear-gradient(to right,#6e6e6e 0 1px,transparent 1px 2px)"></div>
<div style="left:50px;top:363px;width:1px;height:14px;background:repeating-linear-gradient(to bottom,#6e6e6e 0 1px,transparent 1px 2px)"></div>
<div style="left:50px;top:377px;width:12px;height:1px;background:repeating-linear-gradient(to right,#6e6e6e 0 1px,transparent 1px 2px)"></div>
<div style="left:18px;top:393px;width:6px;height:1px;background:repeating-linear-gradient(to right,#6e6e6e 0 1px,transparent 1px 2px)"></div>
<div style="left:8px;top:389px;width:9px;height:9px;box-sizing:border-box;border:1px solid #919191;border-radius:1px;background:linear-gradient(#fff,#e4e4e4)"></div>
<div style="left:10px;top:393px;width:5px;height:1px;background:#404040"></div>
<div style="left:38px;top:409px;width:5px;height:1px;background:repeating-linear-gradient(to right,#6e6e6e 0 1px,transparent 1px 2px)"></div>
<div style="left:27px;top:405px;width:9px;height:9px;box-sizing:border-box;border:1px solid #919191;border-radius:1px;background:linear-gradient(#fff,#e4e4e4)"></div>
<div style="left:29px;top:409px;width:5px;height:1px;background:#404040"></div>
<div style="left:50px;top:425px;width:12px;height:1px;background:repeating-linear-gradient(to right,#6e6e6e 0 1px,transparent 1px 2px)"></div>
<div style="left:50px;top:427px;width:1px;height:14px;background:repeating-linear-gradient(to bottom,#6e6e6e 0 1px,transparent 1px 2px)"></div>
<div style="left:50px;top:441px;width:12px;height:1px;background:repeating-linear-gradient(to right,#6e6e6e 0 1px,transparent 1px 2px)"></div>
<div style="left:50px;top:443px;width:1px;height:14px;background:repeating-linear-gradient(to bottom,#6e6e6e 0 1px,transparent 1px 2px)"></div>
<div style="left:50px;top:457px;width:12px;height:1px;background:repeating-linear-gradient(to right,#6e6e6e 0 1px,transparent 1px 2px)"></div>
<div style="left:50px;top:459px;width:1px;height:14px;background:repeating-linear-gradient(to bottom,#6e6e6e 0 1px,transparent 1px 2px)"></div>
<div style="left:50px;top:473px;width:12px;height:1px;background:repeating-linear-gradient(to right,#6e6e6e 0 1px,transparent 1px 2px)"></div>
<div style="left:50px;top:475px;width:1px;height:14px;background:repeating-linear-gradient(to bottom,#6e6e6e 0 1px,transparent 1px 2px)"></div>
<div style="left:50px;top:489px;width:12px;height:1px;background:repeating-linear-gradient(to right,#6e6e6e 0 1px,transparent 1px 2px)"></div>
<div style="left:50px;top:491px;width:1px;height:14px;background:repeating-linear-gradient(to bottom,#6e6e6e 0 1px,transparent 1px 2px)"></div>
<div style="left:50px;top:505px;width:12px;height:1px;background:repeating-linear-gradient(to right,#6e6e6e 0 1px,transparent 1px 2px)"></div>
<div style="left:50px;top:507px;width:1px;height:14px;background:repeating-linear-gradient(to bottom,#6e6e6e 0 1px,transparent 1px 2px)"></div>
<div style="left:50px;top:521px;width:12px;height:1px;background:repeating-linear-gradient(to right,#6e6e6e 0 1px,transparent 1px 2px)"></div>
<div style="left:50px;top:523px;width:1px;height:14px;background:repeating-linear-gradient(to bottom,#6e6e6e 0 1px,transparent 1px 2px)"></div>
<div style="left:50px;top:537px;width:12px;height:1px;background:repeating-linear-gradient(to right,#6e6e6e 0 1px,transparent 1px 2px)"></div>
<div style="left:50px;top:539px;width:1px;height:14px;background:repeating-linear-gradient(to bottom,#6e6e6e 0 1px,transparent 1px 2px)"></div>
<div style="left:50px;top:553px;width:12px;height:1px;background:repeating-linear-gradient(to right,#6e6e6e 0 1px,transparent 1px 2px)"></div>
<div style="left:50px;top:555px;width:1px;height:14px;background:repeating-linear-gradient(to bottom,#6e6e6e 0 1px,transparent 1px 2px)"></div>
<div style="left:50px;top:569px;width:12px;height:1px;background:repeating-linear-gradient(to right,#6e6e6e 0 1px,transparent 1px 2px)"></div>
<div style="left:31px;top:18px;width:1px;height:7px;background:repeating-linear-gradient(to bottom,#6e6e6e 0 1px,transparent 1px 2px)"></div>
<div style="left:50px;top:49px;width:1px;height:8px;background:repeating-linear-gradient(to bottom,#6e6e6e 0 1px,transparent 1px 2px)"></div>
<div style="left:31px;top:146px;width:1px;height:7px;background:repeating-linear-gradient(to bottom,#6e6e6e 0 1px,transparent 1px 2px)"></div>
<div style="left:50px;top:177px;width:1px;height:8px;background:repeating-linear-gradient(to bottom,#6e6e6e 0 1px,transparent 1px 2px)"></div>
<div style="left:31px;top:274px;width:1px;height:7px;background:repeating-linear-gradient(to bottom,#6e6e6e 0 1px,transparent 1px 2px)"></div>
<div style="left:50px;top:305px;width:1px;height:8px;background:repeating-linear-gradient(to bottom,#6e6e6e 0 1px,transparent 1px 2px)"></div>
<div style="left:31px;top:402px;width:1px;height:3px;background:repeating-linear-gradient(to bottom,#6e6e6e 0 1px,transparent 1px 2px)"></div>
<div style="left:50px;top:417px;width:1px;height:8px;background:repeating-linear-gradient(to bottom,#6e6e6e 0 1px,transparent 1px 2px)"></div>
<svg style="left:24px;top:1px" width="16" height="16" viewBox="0 0 16 16" shape-rendering="crispEdges">
<rect x="12" y="0" width="1" height="2" fill="#0a2a50"/>
<rect x="0" y="2" width="15" height="9" fill="#0a8cf0"/>
<rect x="0" y="11" width="15" height="5" fill="#0b2c55"/>
<rect x="1.5" y="12" width="2" height="1.5" fill="#e8f0f8"/><rect x="6.5" y="12" width="2" height="1.5" fill="#e8f0f8"/><rect x="11.5" y="12" width="2" height="1.5" fill="#e8f0f8"/>
</svg>
<span style="left:44px;top:1px;font-size:11px;line-height:16px">БИМС №1</span>
<svg style="left:43px;top:17px" width="16" height="16" viewBox="0 0 16 16">
<rect x="3" y="1" width="1" height="3" fill="#2a2aa8" shape-rendering="crispEdges"/><rect x="7" y="1" width="1" height="3" fill="#2a2aa8" shape-rendering="crispEdges"/><rect x="11" y="1" width="1" height="3" fill="#2a2aa8" shape-rendering="crispEdges"/>
<path d="M1 4 H14 V9 L13 10 H12 L8.2 16 H6.8 L3 10 H2 L1 9 Z" fill="#3434d2"/>
<path d="M4 10 H11 L8.2 16 H6.8 Z" fill="#2414a8"/>
</svg>
<span style="left:63px;top:17px;font-size:11px;line-height:16px">XP1</span>
<svg style="left:43px;top:33px" width="16" height="16" viewBox="0 0 16 16">
<rect x="3" y="1" width="1" height="3" fill="#2a2aa8" shape-rendering="crispEdges"/><rect x="7" y="1" width="1" height="3" fill="#2a2aa8" shape-rendering="crispEdges"/><rect x="11" y="1" width="1" height="3" fill="#2a2aa8" shape-rendering="crispEdges"/>
<path d="M1 4 H14 V9 L13 10 H12 L8.2 16 H6.8 L3 10 H2 L1 9 Z" fill="#3434d2"/>
<path d="M4 10 H11 L8.2 16 H6.8 Z" fill="#2414a8"/>
</svg>
<span style="left:63px;top:33px;font-size:11px;line-height:16px">XS1</span>
<svg style="left:62px;top:49px" width="16" height="16" viewBox="0 0 16 16">
<path d="M5 2.5 H9.5 L11.5 4.5 V6.5 L9.5 8.5 H5.5 L3.5 10.5 V12.5 L5.5 14.5 H10" stroke="#1a2458" stroke-width="1" fill="none"/>
<rect x="2" y="1" width="3" height="3" fill="#2a0a70"/>
<rect x="10" y="13" width="3" height="3" fill="#2a0a70"/>
</svg>
<div class="clip" style="left:80px;top:49px;width:38px;height:16px;box-sizing:border-box;background:#0078d7;border:1px dotted #000"><span style="left:2px;top:-1px;font-size:11px;line-height:16px;color:#fff;letter-spacing:-0.4px">СНС_1</span></div>
<svg style="left:62px;top:65px" width="16" height="16" viewBox="0 0 16 16">
<path d="M5 2.5 H9.5 L11.5 4.5 V6.5 L9.5 8.5 H5.5 L3.5 10.5 V12.5 L5.5 14.5 H10" stroke="#1a2458" stroke-width="1" fill="none"/>
<rect x="2" y="1" width="3" height="3" fill="#2a0a70"/>
<rect x="10" y="13" width="3" height="3" fill="#2a0a70"/>
</svg>
<span style="left:82px;top:65px;font-size:11px;line-height:16px">СНС_2</span>
<svg style="left:62px;top:81px" width="16" height="16" viewBox="0 0 16 16">
<path d="M5 2.5 H9.5 L11.5 4.5 V6.5 L9.5 8.5 H5.5 L3.5 10.5 V12.5 L5.5 14.5 H10" stroke="#1a2458" stroke-width="1" fill="none"/>
<rect x="2" y="1" width="3" height="3" fill="#2a0a70"/>
<rect x="10" y="13" width="3" height="3" fill="#2a0a70"/>
</svg>
<span style="left:82px;top:81px;font-size:11px;line-height:16px">Метка врем._Неизвестн</span>
<svg style="left:62px;top:97px" width="16" height="16" viewBox="0 0 16 16">
<path d="M5 2.5 H9.5 L11.5 4.5 V6.5 L9.5 8.5 H5.5 L3.5 10.5 V12.5 L5.5 14.5 H10" stroke="#1a2458" stroke-width="1" fill="none"/>
<rect x="2" y="1" width="3" height="3" fill="#2a0a70"/>
<rect x="10" y="13" width="3" height="3" fill="#2a0a70"/>
</svg>
<span style="left:82px;top:97px;font-size:11px;line-height:16px">Метка врем._Неизвестн</span>
<svg style="left:62px;top:113px" width="16" height="16" viewBox="0 0 16 16">
<path d="M5 2.5 H9.5 L11.5 4.5 V6.5 L9.5 8.5 H5.5 L3.5 10.5 V12.5 L5.5 14.5 H10" stroke="#1a2458" stroke-width="1" fill="none"/>
<rect x="2" y="1" width="3" height="3" fill="#2a0a70"/>
<rect x="10" y="13" width="3" height="3" fill="#2a0a70"/>
</svg>
<span style="left:82px;top:113px;font-size:11px;line-height:16px">МФИ_1</span>
<svg style="left:24px;top:129px" width="16" height="16" viewBox="0 0 16 16" shape-rendering="crispEdges">
<rect x="12" y="0" width="1" height="2" fill="#0a2a50"/>
<rect x="0" y="2" width="15" height="9" fill="#0a8cf0"/>
<rect x="0" y="11" width="15" height="5" fill="#0b2c55"/>
<rect x="1.5" y="12" width="2" height="1.5" fill="#e8f0f8"/><rect x="6.5" y="12" width="2" height="1.5" fill="#e8f0f8"/><rect x="11.5" y="12" width="2" height="1.5" fill="#e8f0f8"/>
</svg>
<span style="left:44px;top:129px;font-size:11px;line-height:16px">БИМС №2</span>
<svg style="left:43px;top:145px" width="16" height="16" viewBox="0 0 16 16">
<rect x="3" y="1" width="1" height="3" fill="#2a2aa8" shape-rendering="crispEdges"/><rect x="7" y="1" width="1" height="3" fill="#2a2aa8" shape-rendering="crispEdges"/><rect x="11" y="1" width="1" height="3" fill="#2a2aa8" shape-rendering="crispEdges"/>
<path d="M1 4 H14 V9 L13 10 H12 L8.2 16 H6.8 L3 10 H2 L1 9 Z" fill="#3434d2"/>
<path d="M4 10 H11 L8.2 16 H6.8 Z" fill="#2414a8"/>
</svg>
<span style="left:63px;top:145px;font-size:11px;line-height:16px">XP1</span>
<svg style="left:43px;top:161px" width="16" height="16" viewBox="0 0 16 16">
<rect x="3" y="1" width="1" height="3" fill="#2a2aa8" shape-rendering="crispEdges"/><rect x="7" y="1" width="1" height="3" fill="#2a2aa8" shape-rendering="crispEdges"/><rect x="11" y="1" width="1" height="3" fill="#2a2aa8" shape-rendering="crispEdges"/>
<path d="M1 4 H14 V9 L13 10 H12 L8.2 16 H6.8 L3 10 H2 L1 9 Z" fill="#3434d2"/>
<path d="M4 10 H11 L8.2 16 H6.8 Z" fill="#2414a8"/>
</svg>
<span style="left:63px;top:161px;font-size:11px;line-height:16px">XS1</span>
<svg style="left:62px;top:177px" width="16" height="16" viewBox="0 0 16 16">
<path d="M5 2.5 H9.5 L11.5 4.5 V6.5 L9.5 8.5 H5.5 L3.5 10.5 V12.5 L5.5 14.5 H10" stroke="#1a2458" stroke-width="1" fill="none"/>
<rect x="2" y="1" width="3" height="3" fill="#2a0a70"/>
<rect x="10" y="13" width="3" height="3" fill="#2a0a70"/>
</svg>
<span style="left:82px;top:177px;font-size:11px;line-height:16px">СНС_1</span>
<svg style="left:62px;top:193px" width="16" height="16" viewBox="0 0 16 16">
<path d="M5 2.5 H9.5 L11.5 4.5 V6.5 L9.5 8.5 H5.5 L3.5 10.5 V12.5 L5.5 14.5 H10" stroke="#1a2458" stroke-width="1" fill="none"/>
<rect x="2" y="1" width="3" height="3" fill="#2a0a70"/>
<rect x="10" y="13" width="3" height="3" fill="#2a0a70"/>
</svg>
<span style="left:82px;top:193px;font-size:11px;line-height:16px">СНС_2</span>
<svg style="left:62px;top:209px" width="16" height="16" viewBox="0 0 16 16">
<path d="M5 2.5 H9.5 L11.5 4.5 V6.5 L9.5 8.5 H5.5 L3.5 10.5 V12.5 L5.5 14.5 H10" stroke="#1a2458" stroke-width="1" fill="none"/>
<rect x="2" y="1" width="3" height="3" fill="#2a0a70"/>
<rect x="10" y="13" width="3" height="3" fill="#2a0a70"/>
</svg>
<span style="left:82px;top:209px;font-size:11px;line-height:16px">Метка врем._Неизвестн</span>
<svg style="left:62px;top:225px" width="16" height="16" viewBox="0 0 16 16">
<path d="M5 2.5 H9.5 L11.5 4.5 V6.5 L9.5 8.5 H5.5 L3.5 10.5 V12.5 L5.5 14.5 H10" stroke="#1a2458" stroke-width="1" fill="none"/>
<rect x="2" y="1" width="3" height="3" fill="#2a0a70"/>
<rect x="10" y="13" width="3" height="3" fill="#2a0a70"/>
</svg>
<span style="left:82px;top:225px;font-size:11px;line-height:16px">Метка врем._Неизвестн</span>
<svg style="left:62px;top:241px" width="16" height="16" viewBox="0 0 16 16">
<path d="M5 2.5 H9.5 L11.5 4.5 V6.5 L9.5 8.5 H5.5 L3.5 10.5 V12.5 L5.5 14.5 H10" stroke="#1a2458" stroke-width="1" fill="none"/>
<rect x="2" y="1" width="3" height="3" fill="#2a0a70"/>
<rect x="10" y="13" width="3" height="3" fill="#2a0a70"/>
</svg>
<span style="left:82px;top:241px;font-size:11px;line-height:16px">МФИ_1</span>
<svg style="left:24px;top:257px" width="16" height="16" viewBox="0 0 16 16" shape-rendering="crispEdges">
<rect x="12" y="0" width="1" height="2" fill="#0a2a50"/>
<rect x="0" y="2" width="15" height="9" fill="#0a8cf0"/>
<rect x="0" y="11" width="15" height="5" fill="#0b2c55"/>
<rect x="1.5" y="12" width="2" height="1.5" fill="#e8f0f8"/><rect x="6.5" y="12" width="2" height="1.5" fill="#e8f0f8"/><rect x="11.5" y="12" width="2" height="1.5" fill="#e8f0f8"/>
</svg>
<span style="left:44px;top:257px;font-size:11px;line-height:16px">БИМС №3</span>
<svg style="left:43px;top:273px" width="16" height="16" viewBox="0 0 16 16">
<rect x="3" y="1" width="1" height="3" fill="#2a2aa8" shape-rendering="crispEdges"/><rect x="7" y="1" width="1" height="3" fill="#2a2aa8" shape-rendering="crispEdges"/><rect x="11" y="1" width="1" height="3" fill="#2a2aa8" shape-rendering="crispEdges"/>
<path d="M1 4 H14 V9 L13 10 H12 L8.2 16 H6.8 L3 10 H2 L1 9 Z" fill="#3434d2"/>
<path d="M4 10 H11 L8.2 16 H6.8 Z" fill="#2414a8"/>
</svg>
<span style="left:63px;top:273px;font-size:11px;line-height:16px">XP1</span>
<svg style="left:43px;top:289px" width="16" height="16" viewBox="0 0 16 16">
<rect x="3" y="1" width="1" height="3" fill="#2a2aa8" shape-rendering="crispEdges"/><rect x="7" y="1" width="1" height="3" fill="#2a2aa8" shape-rendering="crispEdges"/><rect x="11" y="1" width="1" height="3" fill="#2a2aa8" shape-rendering="crispEdges"/>
<path d="M1 4 H14 V9 L13 10 H12 L8.2 16 H6.8 L3 10 H2 L1 9 Z" fill="#3434d2"/>
<path d="M4 10 H11 L8.2 16 H6.8 Z" fill="#2414a8"/>
</svg>
<span style="left:63px;top:289px;font-size:11px;line-height:16px">XS1</span>
<svg style="left:62px;top:305px" width="16" height="16" viewBox="0 0 16 16">
<path d="M5 2.5 H9.5 L11.5 4.5 V6.5 L9.5 8.5 H5.5 L3.5 10.5 V12.5 L5.5 14.5 H10" stroke="#1a2458" stroke-width="1" fill="none"/>
<rect x="2" y="1" width="3" height="3" fill="#2a0a70"/>
<rect x="10" y="13" width="3" height="3" fill="#2a0a70"/>
</svg>
<span style="left:82px;top:305px;font-size:11px;line-height:16px">СНС_1</span>
<svg style="left:62px;top:321px" width="16" height="16" viewBox="0 0 16 16">
<path d="M5 2.5 H9.5 L11.5 4.5 V6.5 L9.5 8.5 H5.5 L3.5 10.5 V12.5 L5.5 14.5 H10" stroke="#1a2458" stroke-width="1" fill="none"/>
<rect x="2" y="1" width="3" height="3" fill="#2a0a70"/>
<rect x="10" y="13" width="3" height="3" fill="#2a0a70"/>
</svg>
<span style="left:82px;top:321px;font-size:11px;line-height:16px">СНС_2</span>
<svg style="left:62px;top:337px" width="16" height="16" viewBox="0 0 16 16">
<path d="M5 2.5 H9.5 L11.5 4.5 V6.5 L9.5 8.5 H5.5 L3.5 10.5 V12.5 L5.5 14.5 H10" stroke="#1a2458" stroke-width="1" fill="none"/>
<rect x="2" y="1" width="3" height="3" fill="#2a0a70"/>
<rect x="10" y="13" width="3" height="3" fill="#2a0a70"/>
</svg>
<span style="left:82px;top:337px;font-size:11px;line-height:16px">Метка врем._Неизвестн</span>
<svg style="left:62px;top:353px" width="16" height="16" viewBox="0 0 16 16">
<path d="M5 2.5 H9.5 L11.5 4.5 V6.5 L9.5 8.5 H5.5 L3.5 10.5 V12.5 L5.5 14.5 H10" stroke="#1a2458" stroke-width="1" fill="none"/>
<rect x="2" y="1" width="3" height="3" fill="#2a0a70"/>
<rect x="10" y="13" width="3" height="3" fill="#2a0a70"/>
</svg>
<span style="left:82px;top:353px;font-size:11px;line-height:16px">Метка врем._Неизвестн</span>
<svg style="left:62px;top:369px" width="16" height="16" viewBox="0 0 16 16">
<path d="M5 2.5 H9.5 L11.5 4.5 V6.5 L9.5 8.5 H5.5 L3.5 10.5 V12.5 L5.5 14.5 H10" stroke="#1a2458" stroke-width="1" fill="none"/>
<rect x="2" y="1" width="3" height="3" fill="#2a0a70"/>
<rect x="10" y="13" width="3" height="3" fill="#2a0a70"/>
</svg>
<span style="left:82px;top:369px;font-size:11px;line-height:16px">МФИ_1</span>
<svg style="left:24px;top:385px" width="16" height="16" viewBox="0 0 16 16" shape-rendering="crispEdges">
<rect x="12" y="0" width="1" height="2" fill="#0a2a50"/>
<rect x="0" y="2" width="15" height="9" fill="#0a8cf0"/>
<rect x="0" y="11" width="15" height="5" fill="#0b2c55"/>
<rect x="1.5" y="12" width="2" height="1.5" fill="#e8f0f8"/><rect x="6.5" y="12" width="2" height="1.5" fill="#e8f0f8"/><rect x="11.5" y="12" width="2" height="1.5" fill="#e8f0f8"/>
</svg>
<span style="left:44px;top:385px;font-size:11px;line-height:16px">СРПБЗ</span>
<svg style="left:43px;top:401px" width="16" height="16" viewBox="0 0 16 16">
<rect x="3" y="1" width="1" height="3" fill="#2a2aa8" shape-rendering="crispEdges"/><rect x="7" y="1" width="1" height="3" fill="#2a2aa8" shape-rendering="crispEdges"/><rect x="11" y="1" width="1" height="3" fill="#2a2aa8" shape-rendering="crispEdges"/>
<path d="M1 4 H14 V9 L13 10 H12 L8.2 16 H6.8 L3 10 H2 L1 9 Z" fill="#3434d2"/>
<path d="M4 10 H11 L8.2 16 H6.8 Z" fill="#2414a8"/>
</svg>
<span style="left:63px;top:401px;font-size:11px;line-height:16px">X1</span>
<svg style="left:62px;top:417px" width="16" height="16" viewBox="0 0 16 16">
<path d="M5 2.5 H9.5 L11.5 4.5 V6.5 L9.5 8.5 H5.5 L3.5 10.5 V12.5 L5.5 14.5 H10" stroke="#1a2458" stroke-width="1" fill="none"/>
<rect x="2" y="1" width="3" height="3" fill="#2a0a70"/>
<rect x="10" y="13" width="3" height="3" fill="#2a0a70"/>
</svg>
<span style="left:82px;top:417px;font-size:11px;line-height:16px">МФИ 1_1</span>
<svg style="left:62px;top:433px" width="16" height="16" viewBox="0 0 16 16">
<path d="M5 2.5 H9.5 L11.5 4.5 V6.5 L9.5 8.5 H5.5 L3.5 10.5 V12.5 L5.5 14.5 H10" stroke="#1a2458" stroke-width="1" fill="none"/>
<rect x="2" y="1" width="3" height="3" fill="#2a0a70"/>
<rect x="10" y="13" width="3" height="3" fill="#2a0a70"/>
</svg>
<span style="left:82px;top:433px;font-size:11px;line-height:16px">МФИ 1_2</span>
<svg style="left:62px;top:449px" width="16" height="16" viewBox="0 0 16 16">
<path d="M5 2.5 H9.5 L11.5 4.5 V6.5 L9.5 8.5 H5.5 L3.5 10.5 V12.5 L5.5 14.5 H10" stroke="#1a2458" stroke-width="1" fill="none"/>
<rect x="2" y="1" width="3" height="3" fill="#2a0a70"/>
<rect x="10" y="13" width="3" height="3" fill="#2a0a70"/>
</svg>
<span style="left:82px;top:449px;font-size:11px;line-height:16px">МФИ 2_1</span>
<svg style="left:62px;top:465px" width="16" height="16" viewBox="0 0 16 16">
<path d="M5 2.5 H9.5 L11.5 4.5 V6.5 L9.5 8.5 H5.5 L3.5 10.5 V12.5 L5.5 14.5 H10" stroke="#1a2458" stroke-width="1" fill="none"/>
<rect x="2" y="1" width="3" height="3" fill="#2a0a70"/>
<rect x="10" y="13" width="3" height="3" fill="#2a0a70"/>
</svg>
<span style="left:82px;top:465px;font-size:11px;line-height:16px">МФИ 2_2</span>
<svg style="left:62px;top:481px" width="16" height="16" viewBox="0 0 16 16">
<path d="M5 2.5 H9.5 L11.5 4.5 V6.5 L9.5 8.5 H5.5 L3.5 10.5 V12.5 L5.5 14.5 H10" stroke="#1a2458" stroke-width="1" fill="none"/>
<rect x="2" y="1" width="3" height="3" fill="#2a0a70"/>
<rect x="10" y="13" width="3" height="3" fill="#2a0a70"/>
</svg>
<span style="left:82px;top:481px;font-size:11px;line-height:16px">Речь Гр.</span>
<svg style="left:62px;top:497px" width="16" height="16" viewBox="0 0 16 16">
<path d="M5 2.5 H9.5 L11.5 4.5 V6.5 L9.5 8.5 H5.5 L3.5 10.5 V12.5 L5.5 14.5 H10" stroke="#1a2458" stroke-width="1" fill="none"/>
<rect x="2" y="1" width="3" height="3" fill="#2a0a70"/>
<rect x="10" y="13" width="3" height="3" fill="#2a0a70"/>
</svg>
<span style="left:82px;top:497px;font-size:11px;line-height:16px">Речь_1</span>
<svg style="left:62px;top:513px" width="16" height="16" viewBox="0 0 16 16">
<path d="M5 2.5 H9.5 L11.5 4.5 V6.5 L9.5 8.5 H5.5 L3.5 10.5 V12.5 L5.5 14.5 H10" stroke="#1a2458" stroke-width="1" fill="none"/>
<rect x="2" y="1" width="3" height="3" fill="#2a0a70"/>
<rect x="10" y="13" width="3" height="3" fill="#2a0a70"/>
</svg>
<span style="left:82px;top:513px;font-size:11px;line-height:16px">Речев.команда</span>
<svg style="left:62px;top:529px" width="16" height="16" viewBox="0 0 16 16">
<path d="M5 2.5 H9.5 L11.5 4.5 V6.5 L9.5 8.5 H5.5 L3.5 10.5 V12.5 L5.5 14.5 H10" stroke="#1a2458" stroke-width="1" fill="none"/>
<rect x="2" y="1" width="3" height="3" fill="#2a0a70"/>
<rect x="10" y="13" width="3" height="3" fill="#2a0a70"/>
</svg>
<span style="left:82px;top:529px;font-size:11px;line-height:16px">Опасно земля УРПП</span>
<svg style="left:62px;top:545px" width="16" height="16" viewBox="0 0 16 16">
<path d="M5 2.5 H9.5 L11.5 4.5 V6.5 L9.5 8.5 H5.5 L3.5 10.5 V12.5 L5.5 14.5 H10" stroke="#1a2458" stroke-width="1" fill="none"/>
<rect x="2" y="1" width="3" height="3" fill="#2a0a70"/>
<rect x="10" y="13" width="3" height="3" fill="#2a0a70"/>
</svg>
<span style="left:82px;top:545px;font-size:11px;line-height:16px">Глиссада</span>
<svg style="left:62px;top:561px" width="16" height="16" viewBox="0 0 16 16">
<path d="M5 2.5 H9.5 L11.5 4.5 V6.5 L9.5 8.5 H5.5 L3.5 10.5 V12.5 L5.5 14.5 H10" stroke="#1a2458" stroke-width="1" fill="none"/>
<rect x="2" y="1" width="3" height="3" fill="#2a0a70"/>
<rect x="10" y="13" width="3" height="3" fill="#2a0a70"/>
</svg>
<span style="left:82px;top:561px;font-size:11px;line-height:16px">Сброс</span>
</div>
<div style="left:864px;top:74px;width:17px;height:563px;background:#f0f0f0"></div>
<div style="left:864px;top:92px;width:17px;height:177px;background:#cdcdcd"></div>
<svg style="left:864px;top:74px" width="17" height="17"><path d="M4.5 11.5 L7.5 8 L10.5 11.5" stroke="#606060" stroke-width="2" fill="none"/></svg>
<svg style="left:864px;top:620px" width="17" height="17"><path d="M4.5 6 L7.5 9.5 L10.5 6" stroke="#606060" stroke-width="2" fill="none"/></svg>
<div style="left:657px;top:637px;width:224px;height:17px;background:#f0f0f0"></div>
<div style="left:674px;top:637px;width:165px;height:15px;background:#cdcdcd"></div>
<svg style="left:657px;top:637px" width="17" height="17"><path d="M10 4.5 L6.5 7.5 L10 10.5" stroke="#606060" stroke-width="2" fill="none"/></svg>
<svg style="left:846px;top:637px" width="17" height="17"><path d="M6.5 4.5 L10 7.5 L6.5 10.5" stroke="#606060" stroke-width="2" fill="none"/></svg>
<svg style="left:668px;top:378px" width="36" height="32" viewBox="668 378 36 32"><path d="M671.4 380.5 L701 387.3 L678.2 406.9 L679.3 391.7 Z" fill="#e8392e"/></svg>
<div style="left:233px;top:73px;width:413px;height:582px;box-sizing:border-box;border:1px solid #000;background:#ababab"></div>
<div class="clip" style="left:234px;top:74px;width:411px;height:580px">
<div style="left:0px;top:0px;width:411px;height:22px;background:#fff"></div>
<div style="left:202px;top:0px;width:1px;height:22px;background:#e5e5e5"></div>
<div style="left:270px;top:0px;width:1px;height:22px;background:#e5e5e5"></div>
<div style="left:337px;top:0px;width:1px;height:22px;background:#e5e5e5"></div>
<div class="clip" style="left:10px;top:0;width:192px;height:22px">
<span style="left:0px;top:5.69px;font-size:11px;line-height:13px;">Параметр</span>
</div>
<div class="clip" style="left:211px;top:0;width:59px;height:22px">
<span style="left:0px;top:5.69px;font-size:11px;line-height:13px;">Кол.Источ</span>
</div>
<div class="clip" style="left:277px;top:0;width:60px;height:22px">
<span style="left:0px;top:5.69px;font-size:11px;line-height:13px;">Адрес</span>
</div>
<div class="clip" style="left:344px;top:0;width:67px;height:22px">
<span style="left:0px;top:5.69px;font-size:11px;line-height:13px;">Откуда</span>
</div>
<div style="left:0px;top:22px;width:411px;height:30px;background:#0078d7"></div>
<div style="left:0px;top:51px;width:411px;height:1px;background:#1c64b0"></div>
<div style="left:202px;top:22px;width:1px;height:29px;background:#5aa0e6"></div>
<div style="left:270px;top:22px;width:1px;height:29px;background:#5aa0e6"></div>
<div style="left:337px;top:22px;width:1px;height:29px;background:#5aa0e6"></div>
<div class="clip" style="left:4px;top:22px;width:198px;height:29px">
<div class="clip" style="left:0px;top:1px;width:198px;height:28px"><span style="left:0;top:7.8px;font-size:11px;line-height:13px;color:#fff">Дата (год,месяц, день)</span></div>
</div>
<div class="clip" style="left:206px;top:22px;width:64px;height:29px">
<div class="clip" style="left:0px;top:1px;width:64px;height:28px"><span style="left:0;top:7.8px;font-size:11px;line-height:13px;color:#fff">1</span></div>
</div>
<div class="clip" style="left:274px;top:22px;width:63px;height:29px">
<div class="clip" style="left:0px;top:1px;width:63px;height:28px"><span style="left:0;top:7.8px;font-size:11px;line-height:13px;color:#fff">260</span></div>
</div>
<div class="clip" style="left:341px;top:22px;width:70px;height:29px">
<div class="clip" style="left:0px;top:1px;width:70px;height:28px"><span style="left:0;top:1.3px;font-size:11px;line-height:13px;color:#fff">БИМС<br>№1/XS1/CHC</span></div>
</div>
<div style="left:0px;top:52px;width:411px;height:29px;background:#b3c7bd"></div>
<div style="left:0px;top:80px;width:411px;height:1px;background:#a0a0a0"></div>
<div style="left:202px;top:52px;width:1px;height:28px;background:#a0a0a0"></div>
<div style="left:270px;top:52px;width:1px;height:28px;background:#a0a0a0"></div>
<div style="left:337px;top:52px;width:1px;height:28px;background:#a0a0a0"></div>
<div class="clip" style="left:4px;top:52px;width:198px;height:28px">
<div class="clip" style="left:0px;top:0px;width:198px;height:28px"><span style="left:0;top:7.8px;font-size:11px;line-height:13px;color:#000">Время UTC (сек,мин,час)</span></div>
</div>
<div class="clip" style="left:206px;top:52px;width:64px;height:28px">
<div class="clip" style="left:0px;top:0px;width:64px;height:28px"><span style="left:0;top:7.8px;font-size:11px;line-height:13px;color:#000">1</span></div>
</div>
<div class="clip" style="left:274px;top:52px;width:63px;height:28px">
<div class="clip" style="left:0px;top:0px;width:63px;height:28px"><span style="left:0;top:7.8px;font-size:11px;line-height:13px;color:#000">150</span></div>
</div>
<div class="clip" style="left:341px;top:52px;width:70px;height:28px">
<div class="clip" style="left:0px;top:0px;width:70px;height:28px"><span style="left:0;top:1.3px;font-size:11px;line-height:13px;color:#000">БИМС<br>№1/XS1/CHC</span></div>
</div>
<div style="left:0px;top:81px;width:411px;height:29px;background:#ffffff"></div>
<div style="left:0px;top:109px;width:411px;height:1px;background:#a0a0a0"></div>
<div style="left:202px;top:81px;width:1px;height:28px;background:#a0a0a0"></div>
<div style="left:270px;top:81px;width:1px;height:28px;background:#a0a0a0"></div>
<div style="left:337px;top:81px;width:1px;height:28px;background:#a0a0a0"></div>
<div class="clip" style="left:4px;top:81px;width:198px;height:28px">
<div class="clip" style="left:0px;top:0px;width:198px;height:28px"><span style="left:0;top:1.3px;font-size:11px;line-height:13px;color:#000">Географическая широта (старшие<br>разряды)</span></div>
</div>
<div class="clip" style="left:206px;top:81px;width:64px;height:28px">
<div class="clip" style="left:0px;top:0px;width:64px;height:28px"><span style="left:0;top:7.8px;font-size:11px;line-height:13px;color:#000">1</span></div>
</div>
<div class="clip" style="left:274px;top:81px;width:63px;height:28px">
<div class="clip" style="left:0px;top:0px;width:63px;height:28px"><span style="left:0;top:7.8px;font-size:11px;line-height:13px;color:#000">110</span></div>
</div>
<div class="clip" style="left:341px;top:81px;width:70px;height:28px">
<div class="clip" style="left:0px;top:0px;width:70px;height:28px"><span style="left:0;top:7.8px;font-size:11px;line-height:13px;color:#000">VIM/1X1/VIM_1</span></div>
</div>
<div style="left:0px;top:110px;width:411px;height:29px;background:#9cc8b0"></div>
<div style="left:0px;top:138px;width:411px;height:1px;background:#a0a0a0"></div>
<div style="left:202px;top:110px;width:1px;height:28px;background:#a0a0a0"></div>
<div style="left:270px;top:110px;width:1px;height:28px;background:#a0a0a0"></div>
<div style="left:337px;top:110px;width:1px;height:28px;background:#a0a0a0"></div>
<div class="clip" style="left:4px;top:110px;width:198px;height:28px">
<div class="clip" style="left:0px;top:0px;width:198px;height:28px"><span style="left:0;top:1.3px;font-size:11px;line-height:13px;color:#000">Географическая долгота (старшие<br>разряды)</span></div>
</div>
<div class="clip" style="left:206px;top:110px;width:64px;height:28px">
<div class="clip" style="left:0px;top:0px;width:64px;height:28px"><span style="left:0;top:7.8px;font-size:11px;line-height:13px;color:#000">1</span></div>
</div>
<div class="clip" style="left:274px;top:110px;width:63px;height:28px">
<div class="clip" style="left:0px;top:0px;width:63px;height:28px"><span style="left:0;top:7.8px;font-size:11px;line-height:13px;color:#000">111</span></div>
</div>
<div class="clip" style="left:341px;top:110px;width:70px;height:28px">
<div class="clip" style="left:0px;top:0px;width:70px;height:28px"><span style="left:0;top:1.3px;font-size:11px;line-height:13px;color:#000">БИМС<br>№1/XS1/CHC</span></div>
</div>
<div style="left:0px;top:139px;width:411px;height:29px;background:#bba59b"></div>
<div style="left:0px;top:167px;width:411px;height:1px;background:#a0a0a0"></div>
<div style="left:202px;top:139px;width:1px;height:28px;background:#a0a0a0"></div>
<div style="left:270px;top:139px;width:1px;height:28px;background:#a0a0a0"></div>
<div style="left:337px;top:139px;width:1px;height:28px;background:#a0a0a0"></div>
<div class="clip" style="left:4px;top:139px;width:198px;height:28px">
<div class="clip" style="left:0px;top:0px;width:198px;height:28px"><span style="left:0;top:1.3px;font-size:11px;line-height:13px;color:#000">Высота над поверхностью опорного<br>эллипсоида</span></div>
</div>
<div class="clip" style="left:206px;top:139px;width:64px;height:28px">
<div class="clip" style="left:0px;top:0px;width:64px;height:28px"><span style="left:0;top:7.8px;font-size:11px;line-height:13px;color:#000">1</span></div>
</div>
<div class="clip" style="left:274px;top:139px;width:63px;height:28px">
<div class="clip" style="left:0px;top:0px;width:63px;height:28px"><span style="left:0;top:7.8px;font-size:11px;line-height:13px;color:#000">76</span></div>
</div>
<div class="clip" style="left:341px;top:139px;width:70px;height:28px">
<div class="clip" style="left:0px;top:0px;width:70px;height:28px"><span style="left:0;top:1.3px;font-size:11px;line-height:13px;color:#000">БИМС<br>№1/XS1/CHC</span></div>
</div>
<div style="left:0px;top:168px;width:411px;height:29px;background:#bba59b"></div>
<div style="left:0px;top:196px;width:411px;height:1px;background:#a0a0a0"></div>
<div style="left:202px;top:168px;width:1px;height:28px;background:#a0a0a0"></div>
<div style="left:270px;top:168px;width:1px;height:28px;background:#a0a0a0"></div>
<div style="left:337px;top:168px;width:1px;height:28px;background:#a0a0a0"></div>
<div class="clip" style="left:4px;top:168px;width:198px;height:28px">
<div class="clip" style="left:0px;top:0px;width:198px;height:28px"><span style="left:0;top:7.8px;font-size:11px;line-height:13px;color:#000">Путевой угол истинный</span></div>
</div>
<div class="clip" style="left:206px;top:168px;width:64px;height:28px">
<div class="clip" style="left:0px;top:0px;width:64px;height:28px"><span style="left:0;top:7.8px;font-size:11px;line-height:13px;color:#000">1</span></div>
</div>
<div class="clip" style="left:274px;top:168px;width:63px;height:28px">
<div class="clip" style="left:0px;top:0px;width:63px;height:28px"><span style="left:0;top:7.8px;font-size:11px;line-height:13px;color:#000">103</span></div>
</div>
<div class="clip" style="left:341px;top:168px;width:70px;height:28px">
<div class="clip" style="left:0px;top:0px;width:70px;height:28px"><span style="left:0;top:1.3px;font-size:11px;line-height:13px;color:#000">БИМС<br>№1/XS1/CHC</span></div>
</div>
<div style="left:0px;top:197px;width:411px;height:29px;background:#a79dba"></div>
<div style="left:0px;top:225px;width:411px;height:1px;background:#a0a0a0"></div>
<div style="left:202px;top:197px;width:1px;height:28px;background:#a0a0a0"></div>
<div style="left:270px;top:197px;width:1px;height:28px;background:#a0a0a0"></div>
<div style="left:337px;top:197px;width:1px;height:28px;background:#a0a0a0"></div>
<div class="clip" style="left:4px;top:197px;width:198px;height:28px">
<div class="clip" style="left:0px;top:0px;width:198px;height:28px"><span style="left:0;top:7.8px;font-size:11px;line-height:13px;color:#000">Путевая скорость</span></div>
</div>
<div class="clip" style="left:206px;top:197px;width:64px;height:28px">
<div class="clip" style="left:0px;top:0px;width:64px;height:28px"><span style="left:0;top:7.8px;font-size:11px;line-height:13px;color:#000">1</span></div>
</div>
<div class="clip" style="left:274px;top:197px;width:63px;height:28px">
<div class="clip" style="left:0px;top:0px;width:63px;height:28px"><span style="left:0;top:7.8px;font-size:11px;line-height:13px;color:#000">112</span></div>
</div>
<div class="clip" style="left:341px;top:197px;width:70px;height:28px">
<div class="clip" style="left:0px;top:0px;width:70px;height:28px"><span style="left:0;top:1.3px;font-size:11px;line-height:13px;color:#000">БИМС<br>№1/XS1/CHC</span></div>
</div>
<div style="left:0px;top:226px;width:411px;height:29px;background:#c29bbd"></div>
<div style="left:0px;top:254px;width:411px;height:1px;background:#a0a0a0"></div>
<div style="left:202px;top:226px;width:1px;height:28px;background:#a0a0a0"></div>
<div style="left:270px;top:226px;width:1px;height:28px;background:#a0a0a0"></div>
<div style="left:337px;top:226px;width:1px;height:28px;background:#a0a0a0"></div>
<div class="clip" style="left:4px;top:226px;width:198px;height:28px">
<div class="clip" style="left:0px;top:0px;width:198px;height:28px"><span style="left:0;top:7.8px;font-size:11px;line-height:13px;color:#000">Вертикальная скорость</span></div>
</div>
<div class="clip" style="left:206px;top:226px;width:64px;height:28px">
<div class="clip" style="left:0px;top:0px;width:64px;height:28px"><span style="left:0;top:7.8px;font-size:11px;line-height:13px;color:#000">1</span></div>
</div>
<div class="clip" style="left:274px;top:226px;width:63px;height:28px">
<div class="clip" style="left:0px;top:0px;width:63px;height:28px"><span style="left:0;top:7.8px;font-size:11px;line-height:13px;color:#000">165</span></div>
</div>
<div class="clip" style="left:341px;top:226px;width:70px;height:28px">
<div class="clip" style="left:0px;top:0px;width:70px;height:28px"><span style="left:0;top:1.3px;font-size:11px;line-height:13px;color:#000">БИМС<br>№1/XS1/CHC</span></div>
</div>
<div style="left:0px;top:255px;width:411px;height:29px;background:#b9c5a1"></div>
<div style="left:0px;top:283px;width:411px;height:1px;background:#a0a0a0"></div>
<div style="left:202px;top:255px;width:1px;height:28px;background:#a0a0a0"></div>
<div style="left:270px;top:255px;width:1px;height:28px;background:#a0a0a0"></div>
<div style="left:337px;top:255px;width:1px;height:28px;background:#a0a0a0"></div>
<div class="clip" style="left:4px;top:255px;width:198px;height:28px">
<div class="clip" style="left:0px;top:0px;width:198px;height:28px"><span style="left:0;top:1.3px;font-size:11px;line-height:13px;color:#000">Географическая широта (младшие<br>разряды)</span></div>
</div>
<div class="clip" style="left:206px;top:255px;width:64px;height:28px">
<div class="clip" style="left:0px;top:0px;width:64px;height:28px"><span style="left:0;top:7.8px;font-size:11px;line-height:13px;color:#000">1</span></div>
</div>
<div class="clip" style="left:274px;top:255px;width:63px;height:28px">
<div class="clip" style="left:0px;top:0px;width:63px;height:28px"><span style="left:0;top:7.8px;font-size:11px;line-height:13px;color:#000">120</span></div>
</div>
<div class="clip" style="left:341px;top:255px;width:70px;height:28px">
<div class="clip" style="left:0px;top:0px;width:70px;height:28px"><span style="left:0;top:1.3px;font-size:11px;line-height:13px;color:#000">БИМС<br>№1/XS1/CHC</span></div>
</div>
<div style="left:0px;top:284px;width:411px;height:29px;background:#a8bcc4"></div>
<div style="left:0px;top:312px;width:411px;height:1px;background:#a0a0a0"></div>
<div style="left:202px;top:284px;width:1px;height:28px;background:#a0a0a0"></div>
<div style="left:270px;top:284px;width:1px;height:28px;background:#a0a0a0"></div>
<div style="left:337px;top:284px;width:1px;height:28px;background:#a0a0a0"></div>
<div class="clip" style="left:4px;top:284px;width:198px;height:28px">
<div class="clip" style="left:0px;top:0px;width:198px;height:28px"><span style="left:0;top:1.3px;font-size:11px;line-height:13px;color:#000">Географическая долгота (младшие<br>разряды)</span></div>
</div>
<div class="clip" style="left:206px;top:284px;width:64px;height:28px">
<div class="clip" style="left:0px;top:0px;width:64px;height:28px"><span style="left:0;top:7.8px;font-size:11px;line-height:13px;color:#000">1</span></div>
</div>
<div class="clip" style="left:274px;top:284px;width:63px;height:28px">
<div class="clip" style="left:0px;top:0px;width:63px;height:28px"><span style="left:0;top:7.8px;font-size:11px;line-height:13px;color:#000">121</span></div>
</div>
<div class="clip" style="left:341px;top:284px;width:70px;height:28px">
<div class="clip" style="left:0px;top:0px;width:70px;height:28px"><span style="left:0;top:1.3px;font-size:11px;line-height:13px;color:#000">БИМС<br>№1/XS1/CHC</span></div>
</div>
<div style="left:0px;top:313px;width:411px;height:29px;background:#a9c5d0"></div>
<div style="left:0px;top:341px;width:411px;height:1px;background:#a0a0a0"></div>
<div style="left:202px;top:313px;width:1px;height:28px;background:#a0a0a0"></div>
<div style="left:270px;top:313px;width:1px;height:28px;background:#a0a0a0"></div>
<div style="left:337px;top:313px;width:1px;height:28px;background:#a0a0a0"></div>
<div class="clip" style="left:4px;top:313px;width:198px;height:28px">
<div class="clip" style="left:0px;top:0px;width:198px;height:28px"><span style="left:0;top:1.3px;font-size:11px;line-height:13px;color:#000">СКО определения вертикальной<br>координаты</span></div>
</div>
<div class="clip" style="left:206px;top:313px;width:64px;height:28px">
<div class="clip" style="left:0px;top:0px;width:64px;height:28px"><span style="left:0;top:7.8px;font-size:11px;line-height:13px;color:#000">1</span></div>
</div>
<div class="clip" style="left:274px;top:313px;width:63px;height:28px">
<div class="clip" style="left:0px;top:0px;width:63px;height:28px"><span style="left:0;top:7.8px;font-size:11px;line-height:13px;color:#000">136</span></div>
</div>
<div class="clip" style="left:341px;top:313px;width:70px;height:28px">
<div class="clip" style="left:0px;top:0px;width:70px;height:28px"><span style="left:0;top:1.3px;font-size:11px;line-height:13px;color:#000">БИМС<br>№1/XS1/CHC</span></div>
</div>
<div style="left:0px;top:342px;width:411px;height:29px;background:#c7b5cc"></div>
<div style="left:0px;top:370px;width:411px;height:1px;background:#a0a0a0"></div>
<div style="left:202px;top:342px;width:1px;height:28px;background:#a0a0a0"></div>
<div style="left:270px;top:342px;width:1px;height:28px;background:#a0a0a0"></div>
<div style="left:337px;top:342px;width:1px;height:28px;background:#a0a0a0"></div>
<div class="clip" style="left:4px;top:342px;width:198px;height:28px">
<div class="clip" style="left:0px;top:0px;width:198px;height:28px"><span style="left:0;top:1.3px;font-size:11px;line-height:13px;color:#000">СКО определения горизонтальной<br>координаты</span></div>
</div>
<div class="clip" style="left:206px;top:342px;width:64px;height:28px">
<div class="clip" style="left:0px;top:0px;width:64px;height:28px"><span style="left:0;top:7.8px;font-size:11px;line-height:13px;color:#000">1</span></div>
</div>
<div class="clip" style="left:274px;top:342px;width:63px;height:28px">
<div class="clip" style="left:0px;top:0px;width:63px;height:28px"><span style="left:0;top:7.8px;font-size:11px;line-height:13px;color:#000">247</span></div>
</div>
<div class="clip" style="left:341px;top:342px;width:70px;height:28px">
<div class="clip" style="left:0px;top:0px;width:70px;height:28px"><span style="left:0;top:1.3px;font-size:11px;line-height:13px;color:#000">БИМС<br>№1/XS1/CHC</span></div>
</div>
</div>
<div style="left:886px;top:73px;width:455px;height:582px;box-sizing:border-box;border:1px solid #000;background:#ababab"></div>
<div class="clip" style="left:887px;top:74px;width:453px;height:580px">
<div style="left:0px;top:0px;width:436px;height:22px;background:#fff"></div>
<div style="left:245px;top:0px;width:1px;height:22px;background:#e5e5e5"></div>
<div style="left:301px;top:0px;width:1px;height:22px;background:#e5e5e5"></div>
<div style="left:358px;top:0px;width:1px;height:22px;background:#e5e5e5"></div>
<div class="clip" style="left:10px;top:0;width:235px;height:22px">
<span style="left:0px;top:5.69px;font-size:11px;line-height:13px;">Параметр</span>
</div>
<div class="clip" style="left:253px;top:0;width:48px;height:22px">
<span style="left:0px;top:5.69px;font-size:11px;line-height:13px;">Кол.потребителей</span>
</div>
<div class="clip" style="left:309px;top:0;width:49px;height:22px">
<span style="left:0px;top:5.69px;font-size:11px;line-height:13px;">Адрес</span>
</div>
<div class="clip" style="left:366px;top:0;width:70px;height:22px">
<span style="left:0px;top:5.69px;font-size:11px;line-height:13px;">Куда</span>
</div>
<div style="left:0px;top:22px;width:436px;height:108px;background:#0078d7"></div>
<div style="left:0px;top:129px;width:436px;height:1px;background:#1c64b0"></div>
<div style="left:245px;top:22px;width:1px;height:107px;background:#5aa0e6"></div>
<div style="left:301px;top:22px;width:1px;height:107px;background:#5aa0e6"></div>
<div style="left:358px;top:22px;width:1px;height:107px;background:#5aa0e6"></div>
<div class="clip" style="left:4px;top:22px;width:241px;height:107px">
<div class="clip" style="left:0px;top:1px;width:241px;height:106px"><span style="left:0;top:46.8px;font-size:11px;line-height:13px;color:#fff">Высота над уровнем моря</span></div>
</div>
<div class="clip" style="left:249px;top:22px;width:52px;height:107px">
<div class="clip" style="left:0px;top:1px;width:52px;height:106px"><span style="left:0;top:46.8px;font-size:11px;line-height:13px;color:#fff">6</span></div>
</div>
<div class="clip" style="left:305px;top:22px;width:53px;height:107px">
<div class="clip" style="left:0px;top:1px;width:53px;height:106px"><span style="left:0;top:46.8px;font-size:11px;line-height:13px;color:#fff">76</span></div>
</div>
<div class="clip" style="left:362px;top:22px;width:74px;height:107px">
<div class="clip" style="left:0px;top:1px;width:74px;height:106px"><span style="left:0;top:1.3px;font-size:11px;line-height:13px;color:#fff">СРПБЗ/X1/CH<br>&nbsp;<br>СРПБЗ/X1/CH<br>&nbsp;<br>СБКВ<br>№1/X1/CHC_1<br>&nbsp;<br>СБКВ</span></div>
</div>
<div style="left:0px;top:130px;width:436px;height:55px;background:#ffffff"></div>
<div style="left:0px;top:184px;width:436px;height:1px;background:#a0a0a0"></div>
<div style="left:245px;top:130px;width:1px;height:54px;background:#a0a0a0"></div>
<div style="left:301px;top:130px;width:1px;height:54px;background:#a0a0a0"></div>
<div style="left:358px;top:130px;width:1px;height:54px;background:#a0a0a0"></div>
<div class="clip" style="left:4px;top:130px;width:241px;height:54px">
<div class="clip" style="left:0px;top:0px;width:241px;height:54px"><span style="left:0;top:20.8px;font-size:11px;line-height:13px;color:#000">HDOP</span></div>
</div>
<div class="clip" style="left:249px;top:130px;width:52px;height:54px">
<div class="clip" style="left:0px;top:0px;width:52px;height:54px"><span style="left:0;top:20.8px;font-size:11px;line-height:13px;color:#000">2</span></div>
</div>
<div class="clip" style="left:305px;top:130px;width:53px;height:54px">
<div class="clip" style="left:0px;top:0px;width:53px;height:54px"><span style="left:0;top:20.8px;font-size:11px;line-height:13px;color:#000">101</span></div>
</div>
<div class="clip" style="left:362px;top:130px;width:74px;height:54px">
<div class="clip" style="left:0px;top:0px;width:74px;height:54px"><span style="left:0;top:1.3px;font-size:11px;line-height:13px;color:#000">СБКВ<br>№1/X1/CHC_1<br>&nbsp;<br>СБКВ</span></div>
</div>
<div style="left:0px;top:185px;width:436px;height:55px;background:#ffffff"></div>
<div style="left:0px;top:239px;width:436px;height:1px;background:#a0a0a0"></div>
<div style="left:245px;top:185px;width:1px;height:54px;background:#a0a0a0"></div>
<div style="left:301px;top:185px;width:1px;height:54px;background:#a0a0a0"></div>
<div style="left:358px;top:185px;width:1px;height:54px;background:#a0a0a0"></div>
<div class="clip" style="left:4px;top:185px;width:241px;height:54px">
<div class="clip" style="left:0px;top:0px;width:241px;height:54px"><span style="left:0;top:20.8px;font-size:11px;line-height:13px;color:#000">VDOP</span></div>
</div>
<div class="clip" style="left:249px;top:185px;width:52px;height:54px">
<div class="clip" style="left:0px;top:0px;width:52px;height:54px"><span style="left:0;top:20.8px;font-size:11px;line-height:13px;color:#000">2</span></div>
</div>
<div class="clip" style="left:305px;top:185px;width:53px;height:54px">
<div class="clip" style="left:0px;top:0px;width:53px;height:54px"><span style="left:0;top:20.8px;font-size:11px;line-height:13px;color:#000">102</span></div>
</div>
<div class="clip" style="left:362px;top:185px;width:74px;height:54px">
<div class="clip" style="left:0px;top:0px;width:74px;height:54px"><span style="left:0;top:1.3px;font-size:11px;line-height:13px;color:#000">СБКВ<br>№1/X1/CHC_1<br>&nbsp;<br>СБКВ</span></div>
</div>
<div style="left:0px;top:240px;width:436px;height:81px;background:#bba59b"></div>
<div style="left:0px;top:320px;width:436px;height:1px;background:#a0a0a0"></div>
<div style="left:245px;top:240px;width:1px;height:80px;background:#a0a0a0"></div>
<div style="left:301px;top:240px;width:1px;height:80px;background:#a0a0a0"></div>
<div style="left:358px;top:240px;width:1px;height:80px;background:#a0a0a0"></div>
<div class="clip" style="left:4px;top:240px;width:241px;height:80px">
<div class="clip" style="left:0px;top:0px;width:241px;height:80px"><span style="left:0;top:33.8px;font-size:11px;line-height:13px;color:#000">Путевой угол (ист)</span></div>
</div>
<div class="clip" style="left:249px;top:240px;width:52px;height:80px">
<div class="clip" style="left:0px;top:0px;width:52px;height:80px"><span style="left:0;top:33.8px;font-size:11px;line-height:13px;color:#000">4</span></div>
</div>
<div class="clip" style="left:305px;top:240px;width:53px;height:80px">
<div class="clip" style="left:0px;top:0px;width:53px;height:80px"><span style="left:0;top:33.8px;font-size:11px;line-height:13px;color:#000">103</span></div>
</div>
<div class="clip" style="left:362px;top:240px;width:74px;height:80px">
<div class="clip" style="left:0px;top:0px;width:74px;height:80px"><span style="left:0;top:1.3px;font-size:11px;line-height:13px;color:#000">СРПБЗ/X1/CH<br>&nbsp;<br>СРПБЗ/X1/CH<br>&nbsp;<br>СБКВ<br>№1/X1/CHC_1</span></div>
</div>
<div style="left:0px;top:321px;width:436px;height:20px;background:#ffffff"></div>
<div style="left:0px;top:340px;width:436px;height:1px;background:#a0a0a0"></div>
<div style="left:245px;top:321px;width:1px;height:19px;background:#a0a0a0"></div>
<div style="left:301px;top:321px;width:1px;height:19px;background:#a0a0a0"></div>
<div style="left:358px;top:321px;width:1px;height:19px;background:#a0a0a0"></div>
<div class="clip" style="left:4px;top:321px;width:241px;height:19px">
<div class="clip" style="left:0px;top:0px;width:241px;height:19px"><span style="left:0;top:3.3px;font-size:11px;line-height:13px;color:#000">Широта (грубо)</span></div>
</div>
<div class="clip" style="left:249px;top:321px;width:52px;height:19px">
<div class="clip" style="left:0px;top:0px;width:52px;height:19px"><span style="left:0;top:3.3px;font-size:11px;line-height:13px;color:#000">0</span></div>
</div>
<div class="clip" style="left:305px;top:321px;width:53px;height:19px">
<div class="clip" style="left:0px;top:0px;width:53px;height:19px"><span style="left:0;top:3.3px;font-size:11px;line-height:13px;color:#000">110</span></div>
</div>
<div class="clip" style="left:362px;top:321px;width:74px;height:19px">
<div class="clip" style="left:0px;top:0px;width:74px;height:19px"><span style="left:0;top:3.3px;font-size:11px;line-height:13px;color:#000">&nbsp;</span></div>
</div>
<div style="left:0px;top:341px;width:436px;height:107px;background:#9cc8b0"></div>
<div style="left:0px;top:447px;width:436px;height:1px;background:#a0a0a0"></div>
<div style="left:245px;top:341px;width:1px;height:106px;background:#a0a0a0"></div>
<div style="left:301px;top:341px;width:1px;height:106px;background:#a0a0a0"></div>
<div style="left:358px;top:341px;width:1px;height:106px;background:#a0a0a0"></div>
<div class="clip" style="left:4px;top:341px;width:241px;height:106px">
<div class="clip" style="left:0px;top:0px;width:241px;height:106px"><span style="left:0;top:46.8px;font-size:11px;line-height:13px;color:#000">Долгота (грубо)</span></div>
</div>
<div class="clip" style="left:249px;top:341px;width:52px;height:106px">
<div class="clip" style="left:0px;top:0px;width:52px;height:106px"><span style="left:0;top:46.8px;font-size:11px;line-height:13px;color:#000">6</span></div>
</div>
<div class="clip" style="left:305px;top:341px;width:53px;height:106px">
<div class="clip" style="left:0px;top:0px;width:53px;height:106px"><span style="left:0;top:46.8px;font-size:11px;line-height:13px;color:#000">111</span></div>
</div>
<div class="clip" style="left:362px;top:341px;width:74px;height:106px">
<div class="clip" style="left:0px;top:0px;width:74px;height:106px"><span style="left:0;top:1.3px;font-size:11px;line-height:13px;color:#000">СРПБЗ/X1/CH<br>&nbsp;<br>СРПБЗ/X1/CH<br>&nbsp;<br>СБКВ<br>№1/X1/CHC_1<br>&nbsp;<br>СБКВ</span></div>
</div>
<div style="left:0px;top:448px;width:436px;height:81px;background:#a79dba"></div>
<div style="left:0px;top:528px;width:436px;height:1px;background:#a0a0a0"></div>
<div style="left:245px;top:448px;width:1px;height:80px;background:#a0a0a0"></div>
<div style="left:301px;top:448px;width:1px;height:80px;background:#a0a0a0"></div>
<div style="left:358px;top:448px;width:1px;height:80px;background:#a0a0a0"></div>
<div class="clip" style="left:4px;top:448px;width:241px;height:80px">
<div class="clip" style="left:0px;top:0px;width:241px;height:80px"><span style="left:0;top:33.8px;font-size:11px;line-height:13px;color:#000">Путевая скорость, узлы</span></div>
</div>
<div class="clip" style="left:249px;top:448px;width:52px;height:80px">
<div class="clip" style="left:0px;top:0px;width:52px;height:80px"><span style="left:0;top:33.8px;font-size:11px;line-height:13px;color:#000">4</span></div>
</div>
<div class="clip" style="left:305px;top:448px;width:53px;height:80px">
<div class="clip" style="left:0px;top:0px;width:53px;height:80px"><span style="left:0;top:33.8px;font-size:11px;line-height:13px;color:#000">112</span></div>
</div>
<div class="clip" style="left:362px;top:448px;width:74px;height:80px">
<div class="clip" style="left:0px;top:0px;width:74px;height:80px"><span style="left:0;top:1.3px;font-size:11px;line-height:13px;color:#000">СРПБЗ/X1/CH<br>&nbsp;<br>СРПБЗ/X1/CH<br>&nbsp;<br>СБКВ<br>№1/X1/CHC_1</span></div>
</div>
<div style="left:0px;top:529px;width:436px;height:55px;background:#b9c5a1"></div>
<div style="left:0px;top:583px;width:436px;height:1px;background:#a0a0a0"></div>
<div style="left:245px;top:529px;width:1px;height:54px;background:#a0a0a0"></div>
<div style="left:301px;top:529px;width:1px;height:54px;background:#a0a0a0"></div>
<div style="left:358px;top:529px;width:1px;height:54px;background:#a0a0a0"></div>
<div class="clip" style="left:4px;top:529px;width:241px;height:54px">
<div class="clip" style="left:0px;top:0px;width:241px;height:54px"><span style="left:0;top:20.8px;font-size:11px;line-height:13px;color:#000">Широта (точно)</span></div>
</div>
<div class="clip" style="left:249px;top:529px;width:52px;height:54px">
<div class="clip" style="left:0px;top:0px;width:52px;height:54px"><span style="left:0;top:20.8px;font-size:11px;line-height:13px;color:#000">4</span></div>
</div>
<div class="clip" style="left:305px;top:529px;width:53px;height:54px">
<div class="clip" style="left:0px;top:0px;width:53px;height:54px"><span style="left:0;top:20.8px;font-size:11px;line-height:13px;color:#000">120</span></div>
</div>
<div class="clip" style="left:362px;top:529px;width:74px;height:54px">
<div class="clip" style="left:0px;top:0px;width:74px;height:54px"><span style="left:0;top:1.3px;font-size:11px;line-height:13px;color:#000">СРПБЗ/X1/CH<br>&nbsp;<br>СРПБЗ/X1/CH<br>&nbsp;</span></div>
</div>
</div>
<div style="left:1323px;top:74px;width:17px;height:580px;background:#f0f0f0"></div>
<div style="left:1323px;top:91px;width:17px;height:216px;background:#cdcdcd"></div>
<svg style="left:1323px;top:74px" width="17" height="17"><path d="M4.5 11.5 L7.5 8 L10.5 11.5" stroke="#606060" stroke-width="2" fill="none"/></svg>
<svg style="left:1323px;top:637px" width="17" height="17"><path d="M4.5 6 L7.5 9.5 L10.5 6" stroke="#606060" stroke-width="2" fill="none"/></svg>
<div style="left:25px;top:659px;width:966px;height:33px;box-sizing:border-box;border:1px solid #dcdcdc"></div>
<div style="left:26px;top:665px;width:156px;height:21px;box-sizing:border-box;border:1px solid #adadad;background:#e1e1e1"></div>
<span style="left:26px;width:156px;top:670px;font-size:11px;line-height:13px;text-align:center">Связать каналы по адресу</span>
<div style="left:191px;top:665px;width:127px;height:21px;box-sizing:border-box;border:1px solid #adadad;background:#e1e1e1"></div>
<span style="left:191px;width:127px;top:670px;font-size:11px;line-height:13px;text-align:center">Рассоединить каналы</span>
<div style="left:326px;top:665px;width:111px;height:21px;box-sizing:border-box;border:1px solid #adadad;background:#e1e1e1"></div>
<span style="left:326px;width:111px;top:670px;font-size:11px;line-height:13px;text-align:center">Связать сигналы</span>
<div style="left:446px;top:665px;width:111px;height:21px;box-sizing:border-box;border:1px solid #adadad;background:#e1e1e1"></div>
<span style="left:446px;width:111px;top:670px;font-size:11px;line-height:13px;text-align:center">Удалить связь</span>
<div style="left:565px;top:665px;width:141px;height:21px;box-sizing:border-box;border:1px solid #adadad;background:#e1e1e1"></div>
<span style="left:565px;width:141px;top:670px;font-size:11px;line-height:13px;text-align:center">Связать все по адресу</span>
<div style="left:0px;top:706px;width:1366px;height:1px;background:#dadada"></div>
<span style="left:5px;top:711.02px;font-size:11.5px;line-height:14px;">из Высота над уровнем моря (СНС_1) в Дата (год,месяц, день) (СНС_2)</span>
</body></html>
